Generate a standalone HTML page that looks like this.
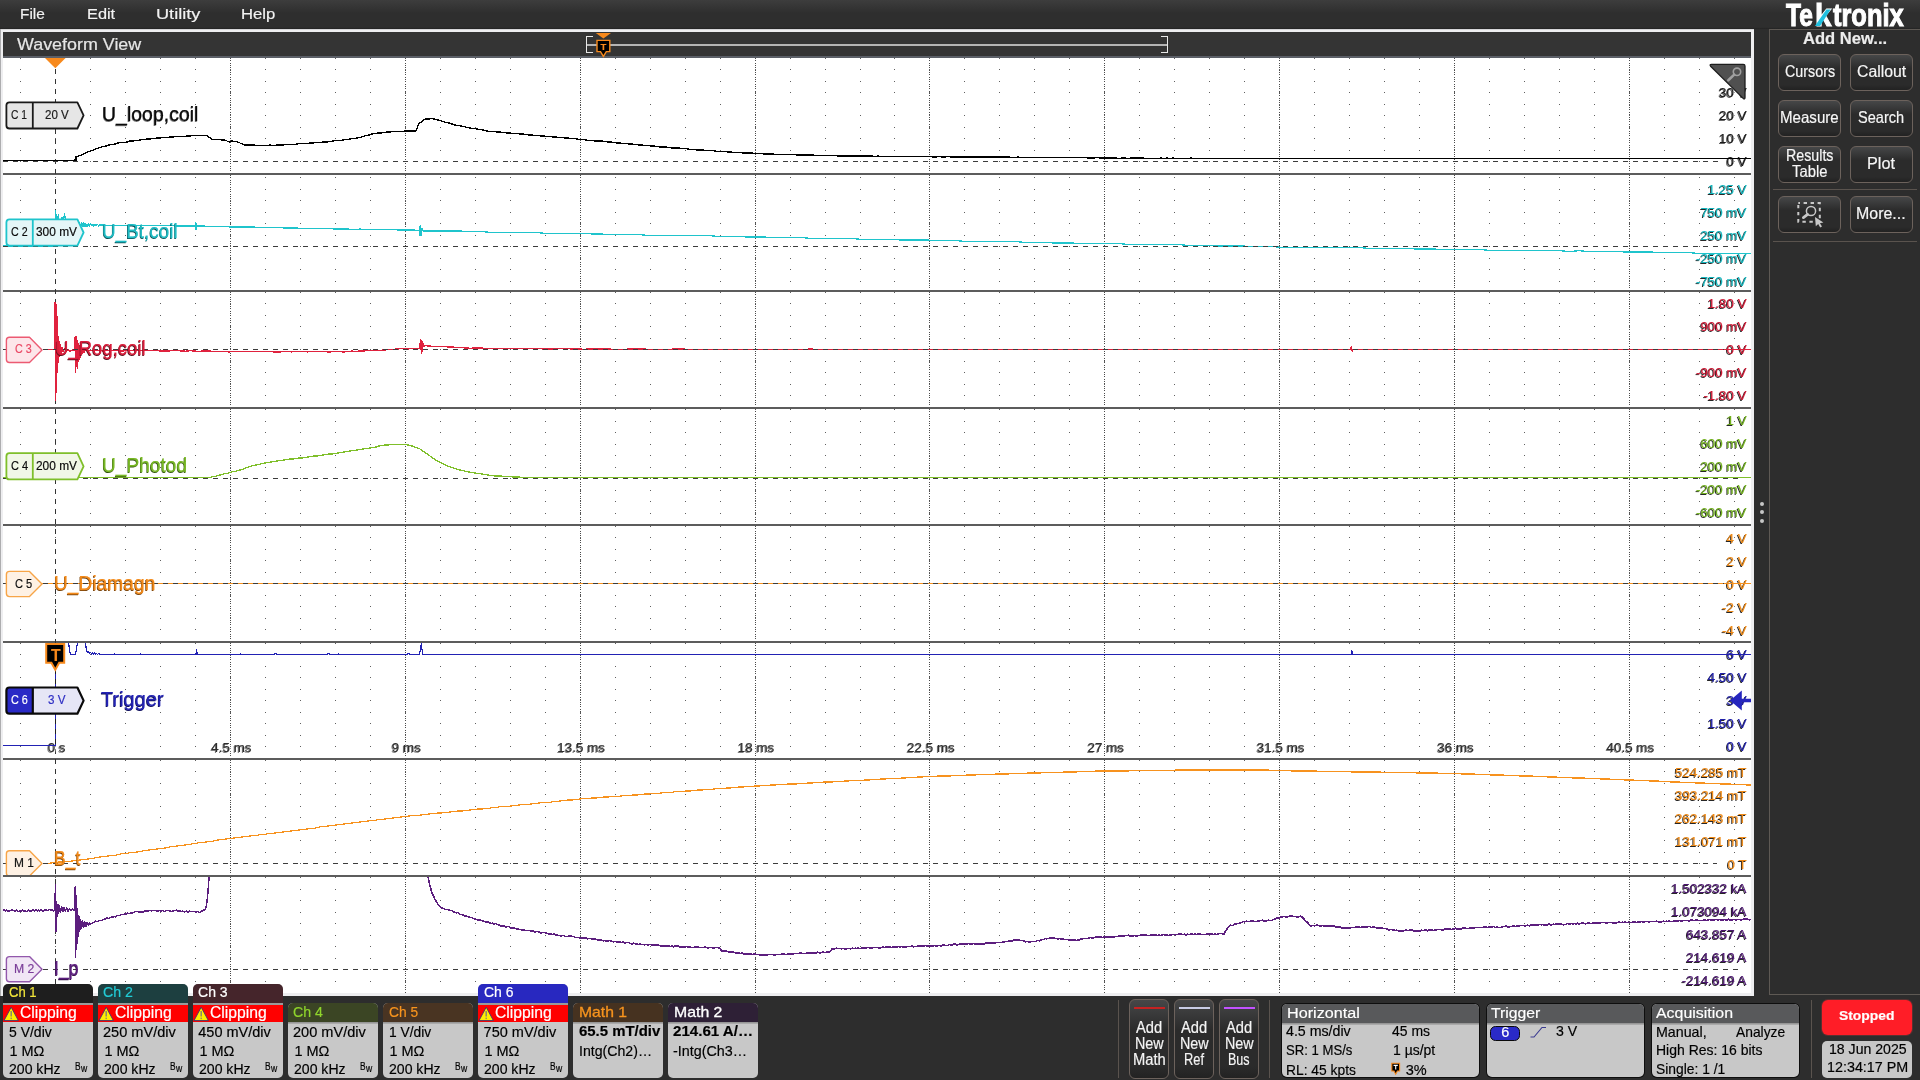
<!DOCTYPE html>
<html lang="en"><head><meta charset="utf-8"><title>Tektronix Waveform View</title>
<style>
html,body{margin:0;padding:0}
body{width:1920px;height:1080px;overflow:hidden;background:#2d2d2d;position:relative;font-family:"Liberation Sans",sans-serif}
svg{position:absolute;left:0;top:0;display:block;pointer-events:none}
.t{position:absolute;white-space:nowrap;line-height:1;transform-origin:0 0;display:block;-webkit-text-stroke:0.18px currentColor}
#menubar{position:absolute;left:0;top:0;width:1920px;height:29px;background:linear-gradient(#3d3d3d,#2e2e2e 45%,#2e2e2e 94%,#222 100%)}
#frame{position:absolute;left:0;top:29px;width:1754px;height:966.7px;background:#eeeef0;box-shadow:inset 1px 0 0 #adadaf,inset 0 1px 0 #d6d6d8}
#wtitle{position:absolute;left:3px;top:32px;width:1748px;height:24px;background:#343434;border-bottom:2px solid #5b5f67}
#side{position:absolute;left:1769px;top:29px;width:160px;height:966px;border:1px solid #5e5954;box-sizing:border-box;background:#2d2d2d}
.btn{position:absolute;border:1px solid #6c625c;border-radius:6px;background:linear-gradient(#464748,#2b2b2b 38%,#2b2b2b 85%,#222)}
.hsep{position:absolute;height:1px;background:#5a534e}
.vsep{position:absolute;width:1px;background:#5a534e}
.bdg{position:absolute;width:90px;background:#c8c8c8;border-radius:5px;overflow:hidden}
.bdg{overflow:clip}
.bh{width:100%}
.bsep{width:100%;height:2px;background:#9a9a9a}
.bsep2{width:100%;height:2px;background:linear-gradient(#8c8c8c,#b4b4b4)}
.clip{width:100%;height:17px;background:#ff0000}
.z1{z-index:1}.z2{z-index:2}.z3{z-index:3}.z4{z-index:4}
</style></head>
<body>
<div id="menubar"></div>
<div id="frame"></div>
<div id="wtitle"></div>
<div style="position:absolute;left:0;top:0;width:1920px;height:1080px;z-index:1;will-change:transform">
<svg id="grid" width="1920" height="1080" viewBox="0 0 1920 1080">
<defs><clipPath id="cpg"><rect x="3" y="58" width="1748" height="935"/></clipPath></defs>
<rect x="3" y="58" width="1748" height="935" fill="#fff"/>
<g clip-path="url(#cpg)">
<g shape-rendering="crispEdges" stroke="#606060" stroke-width="1" fill="none">
<path d="M20.13 58.5H1751" stroke-dasharray="1 33.974"/>
<path d="M20.13 69.5H1751" stroke-dasharray="1 33.974"/>
<path d="M20.13 81.5H1751" stroke-dasharray="1 33.974"/>
<path d="M20.13 92.5H1751" stroke-dasharray="1 33.974"/>
<path d="M20.13 104.5H1751" stroke-dasharray="1 33.974"/>
<path d="M20.13 115.5H1751" stroke-dasharray="1 33.974"/>
<path d="M20.13 127.5H1751" stroke-dasharray="1 33.974"/>
<path d="M20.13 138.5H1751" stroke-dasharray="1 33.974"/>
<path d="M20.13 150.5H1751" stroke-dasharray="1 33.974"/>
<path d="M20.13 161.5H1751" stroke-dasharray="1 33.974"/>
<path d="M20.13 177.5H1751" stroke-dasharray="1 33.974"/>
<path d="M20.13 189.5H1751" stroke-dasharray="1 33.974"/>
<path d="M20.13 200.5H1751" stroke-dasharray="1 33.974"/>
<path d="M20.13 212.5H1751" stroke-dasharray="1 33.974"/>
<path d="M20.13 223.5H1751" stroke-dasharray="1 33.974"/>
<path d="M20.13 235.5H1751" stroke-dasharray="1 33.974"/>
<path d="M20.13 246.5H1751" stroke-dasharray="1 33.974"/>
<path d="M20.13 258.5H1751" stroke-dasharray="1 33.974"/>
<path d="M20.13 269.5H1751" stroke-dasharray="1 33.974"/>
<path d="M20.13 281.5H1751" stroke-dasharray="1 33.974"/>
<path d="M20.13 292.5H1751" stroke-dasharray="1 33.974"/>
<path d="M20.13 303.5H1751" stroke-dasharray="1 33.974"/>
<path d="M20.13 315.5H1751" stroke-dasharray="1 33.974"/>
<path d="M20.13 326.5H1751" stroke-dasharray="1 33.974"/>
<path d="M20.13 338.5H1751" stroke-dasharray="1 33.974"/>
<path d="M20.13 349.5H1751" stroke-dasharray="1 33.974"/>
<path d="M20.13 361.5H1751" stroke-dasharray="1 33.974"/>
<path d="M20.13 372.5H1751" stroke-dasharray="1 33.974"/>
<path d="M20.13 384.5H1751" stroke-dasharray="1 33.974"/>
<path d="M20.13 395.5H1751" stroke-dasharray="1 33.974"/>
<path d="M20.13 409.5H1751" stroke-dasharray="1 33.974"/>
<path d="M20.13 421.5H1751" stroke-dasharray="1 33.974"/>
<path d="M20.13 432.5H1751" stroke-dasharray="1 33.974"/>
<path d="M20.13 444.5H1751" stroke-dasharray="1 33.974"/>
<path d="M20.13 455.5H1751" stroke-dasharray="1 33.974"/>
<path d="M20.13 467.5H1751" stroke-dasharray="1 33.974"/>
<path d="M20.13 478.5H1751" stroke-dasharray="1 33.974"/>
<path d="M20.13 490.5H1751" stroke-dasharray="1 33.974"/>
<path d="M20.13 501.5H1751" stroke-dasharray="1 33.974"/>
<path d="M20.13 513.5H1751" stroke-dasharray="1 33.974"/>
<path d="M20.13 526.5H1751" stroke-dasharray="1 33.974"/>
<path d="M20.13 537.5H1751" stroke-dasharray="1 33.974"/>
<path d="M20.13 549.5H1751" stroke-dasharray="1 33.974"/>
<path d="M20.13 560.5H1751" stroke-dasharray="1 33.974"/>
<path d="M20.13 572.5H1751" stroke-dasharray="1 33.974"/>
<path d="M20.13 583.5H1751" stroke-dasharray="1 33.974"/>
<path d="M20.13 595.5H1751" stroke-dasharray="1 33.974"/>
<path d="M20.13 606.5H1751" stroke-dasharray="1 33.974"/>
<path d="M20.13 618.5H1751" stroke-dasharray="1 33.974"/>
<path d="M20.13 629.5H1751" stroke-dasharray="1 33.974"/>
<path d="M20.13 643.5H1751" stroke-dasharray="1 33.974"/>
<path d="M20.13 654.5H1751" stroke-dasharray="1 33.974"/>
<path d="M20.13 666.5H1751" stroke-dasharray="1 33.974"/>
<path d="M20.13 677.5H1751" stroke-dasharray="1 33.974"/>
<path d="M20.13 689.5H1751" stroke-dasharray="1 33.974"/>
<path d="M20.13 700.5H1751" stroke-dasharray="1 33.974"/>
<path d="M20.13 712.5H1751" stroke-dasharray="1 33.974"/>
<path d="M20.13 723.5H1751" stroke-dasharray="1 33.974"/>
<path d="M20.13 735.5H1751" stroke-dasharray="1 33.974"/>
<path d="M20.13 746.5H1751" stroke-dasharray="1 33.974"/>
<path d="M20.13 760.5H1751" stroke-dasharray="1 33.974"/>
<path d="M20.13 771.5H1751" stroke-dasharray="1 33.974"/>
<path d="M20.13 783.5H1751" stroke-dasharray="1 33.974"/>
<path d="M20.13 794.5H1751" stroke-dasharray="1 33.974"/>
<path d="M20.13 806.5H1751" stroke-dasharray="1 33.974"/>
<path d="M20.13 817.5H1751" stroke-dasharray="1 33.974"/>
<path d="M20.13 829.5H1751" stroke-dasharray="1 33.974"/>
<path d="M20.13 840.5H1751" stroke-dasharray="1 33.974"/>
<path d="M20.13 852.5H1751" stroke-dasharray="1 33.974"/>
<path d="M20.13 863.5H1751" stroke-dasharray="1 33.974"/>
<path d="M20.13 877.5H1751" stroke-dasharray="1 33.974"/>
<path d="M20.13 889.5H1751" stroke-dasharray="1 33.974"/>
<path d="M20.13 900.5H1751" stroke-dasharray="1 33.974"/>
<path d="M20.13 912.5H1751" stroke-dasharray="1 33.974"/>
<path d="M20.13 923.5H1751" stroke-dasharray="1 33.974"/>
<path d="M20.13 935.5H1751" stroke-dasharray="1 33.974"/>
<path d="M20.13 946.5H1751" stroke-dasharray="1 33.974"/>
<path d="M20.13 958.5H1751" stroke-dasharray="1 33.974"/>
<path d="M20.13 969.5H1751" stroke-dasharray="1 33.974"/>
<path d="M20.13 981.5H1751" stroke-dasharray="1 33.974"/>
<path d="M230.5 58V993" stroke="#4a4a4a" stroke-dasharray="1 1.34"/>
<path d="M405.5 58V993" stroke="#4a4a4a" stroke-dasharray="1 1.34"/>
<path d="M580.5 58V993" stroke="#4a4a4a" stroke-dasharray="1 1.34"/>
<path d="M755.5 58V993" stroke="#4a4a4a" stroke-dasharray="1 1.34"/>
<path d="M929.5 58V993" stroke="#4a4a4a" stroke-dasharray="1 1.34"/>
<path d="M1104.5 58V993" stroke="#4a4a4a" stroke-dasharray="1 1.34"/>
<path d="M1279.5 58V993" stroke="#4a4a4a" stroke-dasharray="1 1.34"/>
<path d="M1454.5 58V993" stroke="#4a4a4a" stroke-dasharray="1 1.34"/>
<path d="M1629.5 58V993" stroke="#4a4a4a" stroke-dasharray="1 1.34"/>
</g>
<g shape-rendering="crispEdges" fill="#5c5c5c">
<rect x="3" y="173" width="1748" height="2"/>
<rect x="3" y="290" width="1748" height="2"/>
<rect x="3" y="407" width="1748" height="2"/>
<rect x="3" y="524" width="1748" height="2"/>
<rect x="3" y="641" width="1748" height="2"/>
<rect x="3" y="758" width="1748" height="2"/>
<rect x="3" y="875" width="1748" height="2"/>
</g>
<path d="M55.5 58V993" stroke="#333" stroke-width="1" stroke-dasharray="5 5" stroke-dashoffset="-1" shape-rendering="crispEdges"/>
</g></svg>
</div>
<div style="position:absolute;left:0;top:0;width:1920px;height:1080px;z-index:2;will-change:transform">
<span class="t" style="left:1719.03px;top:86.00px;font-size:13.4px;color:#1a1a1a;text-shadow:-1px 1px 0 #555,0 0 2px #fff,0 0 2px #fff,0 0 3px #fff,0 0 3px #fff;">30 V</span>
<span class="t" style="left:1719.03px;top:109.00px;font-size:13.4px;color:#1a1a1a;text-shadow:-1px 1px 0 #666,0 0 2px #fff,0 0 2px #fff,0 0 3px #fff,0 0 3px #fff;">20 V</span>
<span class="t" style="left:1719.03px;top:132.00px;font-size:13.4px;color:#1a1a1a;text-shadow:-1px 1px 0 #666,0 0 2px #fff,0 0 2px #fff,0 0 3px #fff,0 0 3px #fff;">10 V</span>
<span class="t" style="left:1726.50px;top:155.00px;font-size:13.4px;color:#1a1a1a;text-shadow:-1px 1px 0 #666,0 0 2px #fff,0 0 2px #fff,0 0 3px #fff,0 0 3px #fff;">0 V</span>
<span class="t" style="left:1707.87px;top:183.00px;font-size:13.4px;color:#14b4bc;text-shadow:-1px 1px 0 rgba(0,0,0,0.85),0 0 2px #fff,0 0 2px #fff,0 0 3px #fff,0 0 3px #fff;">1.25 V</span>
<span class="t" style="left:1700.40px;top:206.00px;font-size:13.4px;color:#14b4bc;text-shadow:-1px 1px 0 rgba(0,0,0,0.85),0 0 2px #fff,0 0 2px #fff,0 0 3px #fff,0 0 3px #fff;">750 mV</span>
<span class="t" style="left:1700.40px;top:229.00px;font-size:13.4px;color:#14b4bc;text-shadow:-1px 1px 0 rgba(0,0,0,0.85),0 0 2px #fff,0 0 2px #fff,0 0 3px #fff,0 0 3px #fff;">250 mV</span>
<span class="t" style="left:1695.95px;top:252.00px;font-size:13.4px;color:#14b4bc;text-shadow:-1px 1px 0 rgba(0,0,0,0.85),0 0 2px #fff,0 0 2px #fff,0 0 3px #fff,0 0 3px #fff;">-250 mV</span>
<span class="t" style="left:1695.95px;top:275.00px;font-size:13.4px;color:#14b4bc;text-shadow:-1px 1px 0 rgba(0,0,0,0.85),0 0 2px #fff,0 0 2px #fff,0 0 3px #fff,0 0 3px #fff;">-750 mV</span>
<span class="t" style="left:1707.87px;top:297.00px;font-size:13.4px;color:#cc1834;text-shadow:-1px 1px 0 rgba(0,0,0,0.85),0 0 2px #fff,0 0 2px #fff,0 0 3px #fff,0 0 3px #fff;">1.80 V</span>
<span class="t" style="left:1700.40px;top:320.00px;font-size:13.4px;color:#cc1834;text-shadow:-1px 1px 0 rgba(0,0,0,0.85),0 0 2px #fff,0 0 2px #fff,0 0 3px #fff,0 0 3px #fff;">900 mV</span>
<span class="t" style="left:1726.50px;top:343.00px;font-size:13.4px;color:#cc1834;text-shadow:-1px 1px 0 rgba(0,0,0,0.85),0 0 2px #fff,0 0 2px #fff,0 0 3px #fff,0 0 3px #fff;">0 V</span>
<span class="t" style="left:1695.95px;top:366.00px;font-size:13.4px;color:#cc1834;text-shadow:-1px 1px 0 rgba(0,0,0,0.85),0 0 2px #fff,0 0 2px #fff,0 0 3px #fff,0 0 3px #fff;">-900 mV</span>
<span class="t" style="left:1703.38px;top:389.00px;font-size:13.4px;color:#cc1834;text-shadow:-1px 1px 0 rgba(0,0,0,0.85),0 0 2px #fff,0 0 2px #fff,0 0 3px #fff,0 0 3px #fff;">-1.80 V</span>
<span class="t" style="left:1726.50px;top:414.00px;font-size:13.4px;color:#72b020;text-shadow:-1px 1px 0 rgba(0,0,0,0.85),0 0 2px #fff,0 0 2px #fff,0 0 3px #fff,0 0 3px #fff;">1 V</span>
<span class="t" style="left:1700.40px;top:437.00px;font-size:13.4px;color:#72b020;text-shadow:-1px 1px 0 rgba(0,0,0,0.85),0 0 2px #fff,0 0 2px #fff,0 0 3px #fff,0 0 3px #fff;">600 mV</span>
<span class="t" style="left:1700.40px;top:460.00px;font-size:13.4px;color:#72b020;text-shadow:-1px 1px 0 rgba(0,0,0,0.85),0 0 2px #fff,0 0 2px #fff,0 0 3px #fff,0 0 3px #fff;">200 mV</span>
<span class="t" style="left:1695.95px;top:483.00px;font-size:13.4px;color:#72b020;text-shadow:-1px 1px 0 rgba(0,0,0,0.85),0 0 2px #fff,0 0 2px #fff,0 0 3px #fff,0 0 3px #fff;">-200 mV</span>
<span class="t" style="left:1695.95px;top:506.00px;font-size:13.4px;color:#72b020;text-shadow:-1px 1px 0 rgba(0,0,0,0.85),0 0 2px #fff,0 0 2px #fff,0 0 3px #fff,0 0 3px #fff;">-600 mV</span>
<span class="t" style="left:1726.50px;top:532.00px;font-size:13.4px;color:#ee8a18;text-shadow:-1px 1px 0 rgba(0,0,0,0.85),0 0 2px #fff,0 0 2px #fff,0 0 3px #fff,0 0 3px #fff;">4 V</span>
<span class="t" style="left:1726.50px;top:555.00px;font-size:13.4px;color:#ee8a18;text-shadow:-1px 1px 0 rgba(0,0,0,0.85),0 0 2px #fff,0 0 2px #fff,0 0 3px #fff,0 0 3px #fff;">2 V</span>
<span class="t" style="left:1726.50px;top:578.00px;font-size:13.4px;color:#ee8a18;text-shadow:-1px 1px 0 rgba(0,0,0,0.85),0 0 2px #fff,0 0 2px #fff,0 0 3px #fff,0 0 3px #fff;">0 V</span>
<span class="t" style="left:1722.01px;top:601.00px;font-size:13.4px;color:#ee8a18;text-shadow:-1px 1px 0 rgba(0,0,0,0.85),0 0 2px #fff,0 0 2px #fff,0 0 3px #fff,0 0 3px #fff;">-2 V</span>
<span class="t" style="left:1722.01px;top:624.00px;font-size:13.4px;color:#ee8a18;text-shadow:-1px 1px 0 rgba(0,0,0,0.85),0 0 2px #fff,0 0 2px #fff,0 0 3px #fff,0 0 3px #fff;">-4 V</span>
<span class="t" style="left:1726.50px;top:648.00px;font-size:13.4px;color:#2020a8;text-shadow:-1px 1px 0 rgba(0,0,0,0.85),0 0 2px #fff,0 0 2px #fff,0 0 3px #fff,0 0 3px #fff;">6 V</span>
<span class="t" style="left:1707.87px;top:671.00px;font-size:13.4px;color:#2020a8;text-shadow:-1px 1px 0 rgba(0,0,0,0.85),0 0 2px #fff,0 0 2px #fff,0 0 3px #fff,0 0 3px #fff;">4.50 V</span>
<span class="t" style="left:1726.50px;top:694.00px;font-size:13.4px;color:#2020a8;text-shadow:-1px 1px 0 rgba(0,0,0,0.85),0 0 2px #fff,0 0 2px #fff,0 0 3px #fff,0 0 3px #fff;">3 V</span>
<span class="t" style="left:1707.87px;top:717.00px;font-size:13.4px;color:#2020a8;text-shadow:-1px 1px 0 rgba(0,0,0,0.85),0 0 2px #fff,0 0 2px #fff,0 0 3px #fff,0 0 3px #fff;">1.50 V</span>
<span class="t" style="left:1726.50px;top:740.00px;font-size:13.4px;color:#2020a8;text-shadow:-1px 1px 0 rgba(0,0,0,0.85),0 0 2px #fff,0 0 2px #fff,0 0 3px #fff,0 0 3px #fff;">0 V</span>
<span class="t" style="left:1675.08px;top:766.00px;font-size:13.4px;color:#ee8a18;text-shadow:-1px 1px 0 rgba(0,0,0,0.85),0 0 2px #fff,0 0 2px #fff,0 0 3px #fff,0 0 3px #fff;">524.285 mT</span>
<span class="t" style="left:1675.08px;top:789.00px;font-size:13.4px;color:#ee8a18;text-shadow:-1px 1px 0 rgba(0,0,0,0.85),0 0 2px #fff,0 0 2px #fff,0 0 3px #fff,0 0 3px #fff;">393.214 mT</span>
<span class="t" style="left:1675.08px;top:812.00px;font-size:13.4px;color:#ee8a18;text-shadow:-1px 1px 0 rgba(0,0,0,0.85),0 0 2px #fff,0 0 2px #fff,0 0 3px #fff,0 0 3px #fff;">262.143 mT</span>
<span class="t" style="left:1675.08px;top:835.00px;font-size:13.4px;color:#ee8a18;text-shadow:-1px 1px 0 rgba(0,0,0,0.85),0 0 2px #fff,0 0 2px #fff,0 0 3px #fff,0 0 3px #fff;">131.071 mT</span>
<span class="t" style="left:1727.47px;top:858.00px;font-size:13.4px;color:#ee8a18;text-shadow:-1px 1px 0 rgba(0,0,0,0.85),0 0 2px #fff,0 0 2px #fff,0 0 3px #fff,0 0 3px #fff;">0 T</span>
<span class="t" style="left:1671.33px;top:882.00px;font-size:13.4px;color:#4c1670;text-shadow:-1px 1px 0 rgba(0,0,0,0.85),0 0 2px #fff,0 0 2px #fff,0 0 3px #fff,0 0 3px #fff;">1.502332 kA</span>
<span class="t" style="left:1671.33px;top:905.00px;font-size:13.4px;color:#4c1670;text-shadow:-1px 1px 0 rgba(0,0,0,0.85),0 0 2px #fff,0 0 2px #fff,0 0 3px #fff,0 0 3px #fff;">1.073094 kA</span>
<span class="t" style="left:1686.23px;top:928.00px;font-size:13.4px;color:#4c1670;text-shadow:-1px 1px 0 rgba(0,0,0,0.85),0 0 2px #fff,0 0 2px #fff,0 0 3px #fff,0 0 3px #fff;">643.857 A</span>
<span class="t" style="left:1686.23px;top:951.00px;font-size:13.4px;color:#4c1670;text-shadow:-1px 1px 0 rgba(0,0,0,0.85),0 0 2px #fff,0 0 2px #fff,0 0 3px #fff,0 0 3px #fff;">214.619 A</span>
<span class="t" style="left:1681.78px;top:974.00px;font-size:13.4px;color:#4c1670;text-shadow:-1px 1px 0 rgba(0,0,0,0.85),0 0 2px #fff,0 0 2px #fff,0 0 3px #fff,0 0 3px #fff;">-214.619 A</span>
<span class="t" style="left:47.66px;top:741.00px;font-size:13.4px;color:#2e2e2e;text-shadow:-1px 1px 0 rgba(0,0,0,0.5),0 0 2px #fff,0 0 2px #fff,0 0 3px #fff,0 0 3px #fff;">0 s</span>
<span class="t" style="left:211.37px;top:741.00px;font-size:13.4px;color:#2e2e2e;text-shadow:-1px 1px 0 rgba(0,0,0,0.5),0 0 2px #fff,0 0 2px #fff,0 0 3px #fff,0 0 3px #fff;">4.5 ms</span>
<span class="t" style="left:391.82px;top:741.00px;font-size:13.4px;color:#2e2e2e;text-shadow:-1px 1px 0 rgba(0,0,0,0.5),0 0 2px #fff,0 0 2px #fff,0 0 3px #fff,0 0 3px #fff;">9 ms</span>
<span class="t" style="left:557.37px;top:741.00px;font-size:13.4px;color:#2e2e2e;text-shadow:-1px 1px 0 rgba(0,0,0,0.5),0 0 2px #fff,0 0 2px #fff,0 0 3px #fff,0 0 3px #fff;">13.5 ms</span>
<span class="t" style="left:737.84px;top:741.00px;font-size:13.4px;color:#2e2e2e;text-shadow:-1px 1px 0 rgba(0,0,0,0.5),0 0 2px #fff,0 0 2px #fff,0 0 3px #fff,0 0 3px #fff;">18 ms</span>
<span class="t" style="left:907.11px;top:741.00px;font-size:13.4px;color:#2e2e2e;text-shadow:-1px 1px 0 rgba(0,0,0,0.5),0 0 2px #fff,0 0 2px #fff,0 0 3px #fff,0 0 3px #fff;">22.5 ms</span>
<span class="t" style="left:1087.58px;top:741.00px;font-size:13.4px;color:#2e2e2e;text-shadow:-1px 1px 0 rgba(0,0,0,0.5),0 0 2px #fff,0 0 2px #fff,0 0 3px #fff,0 0 3px #fff;">27 ms</span>
<span class="t" style="left:1256.85px;top:741.00px;font-size:13.4px;color:#2e2e2e;text-shadow:-1px 1px 0 rgba(0,0,0,0.5),0 0 2px #fff,0 0 2px #fff,0 0 3px #fff,0 0 3px #fff;">31.5 ms</span>
<span class="t" style="left:1437.32px;top:741.00px;font-size:13.4px;color:#2e2e2e;text-shadow:-1px 1px 0 rgba(0,0,0,0.5),0 0 2px #fff,0 0 2px #fff,0 0 3px #fff,0 0 3px #fff;">36 ms</span>
<span class="t" style="left:1606.59px;top:741.00px;font-size:13.4px;color:#2e2e2e;text-shadow:-1px 1px 0 rgba(0,0,0,0.5),0 0 2px #fff,0 0 2px #fff,0 0 3px #fff,0 0 3px #fff;">40.5 ms</span>
</div>
<div style="position:absolute;left:0;top:0;width:1920px;height:1080px;z-index:3;will-change:transform">
<svg id="waves" width="1920" height="1080" viewBox="0 0 1920 1080">
<defs><clipPath id="cp"><rect x="3" y="58" width="1748" height="935"/></clipPath></defs>
<clipPath id="cs6"><rect x="3" y="643" width="1748" height="115"/></clipPath><clipPath id="cs8"><rect x="3" y="877" width="1748" height="116"/></clipPath>
<g clip-path="url(#cp)">
<path d="M3.0 160.5L6.0 160.5L9.0 160.5L12.0 160.5L15.0 160.5L18.0 160.5L21.0 160.5L24.0 160.5L27.0 160.5L30.0 160.5L33.0 160.5L36.0 160.5L39.0 160.5L42.0 160.5L45.0 160.5L48.0 160.5L51.0 160.5L54.0 160.5L57.0 160.5L60.0 160.5L63.0 160.5L66.0 160.5L69.0 160.5L72.0 160.5L75.0 160.5L75.5 156.5L76.0 161.0L76.5 157.0L80.0 155.5L83.3 154.0L86.7 152.5L90.0 151.0L93.3 150.0L96.7 148.5L100.0 147.5L103.0 146.5L106.0 146.0L109.0 145.0L112.0 144.5L115.0 144.0L118.0 143.0L121.0 142.5L124.0 142.5L127.0 142.0L130.0 141.0L133.3 141.0L136.7 140.5L140.0 140.0L143.3 139.5L146.7 139.0L150.0 139.0L153.3 138.5L156.7 138.0L160.0 138.0L163.3 137.5L166.7 137.5L170.0 137.0L173.3 137.0L176.7 136.5L180.0 136.5L183.3 136.5L186.7 136.0L190.0 136.0L193.4 135.5L196.8 135.5L200.2 135.5L203.6 135.5L207.0 135.5L212.0 139.5L215.2 139.5L218.5 139.5L221.8 140.0L225.0 140.0L229.0 142.0L232.0 141.0L236.0 141.5L239.0 142.5L242.0 144.0L245.0 145.0L248.0 145.0L251.0 145.0L254.0 145.0L257.0 145.5L260.0 145.5L263.3 145.5L266.7 145.5L270.0 145.0L273.3 145.5L276.7 145.0L280.0 145.0L283.3 145.0L286.7 144.5L290.0 144.5L293.3 144.5L296.7 144.0L300.0 143.5L303.3 143.5L306.7 143.5L310.0 143.0L313.3 143.0L316.7 142.5L320.0 142.5L323.3 142.0L326.7 142.0L330.0 141.5L333.3 141.0L336.7 140.5L340.0 140.5L343.3 140.0L346.7 139.5L350.0 139.0L353.3 138.5L356.7 138.0L360.0 137.5L363.0 136.5L366.0 135.5L369.0 135.0L372.0 134.0L375.0 133.5L378.0 133.0L381.0 133.0L384.0 132.5L387.0 132.0L390.0 132.0L393.0 131.5L396.0 131.5L399.0 131.5L402.0 131.5L405.0 131.0L408.7 131.0L412.3 131.0L416.0 131.0L419.0 123.5L422.0 121.5L425.0 119.0L428.5 119.0L432.0 118.5L436.0 119.5L440.0 120.5L443.0 121.5L446.0 122.5L449.0 123.0L452.0 124.0L455.0 125.0L458.0 125.5L461.0 126.0L464.0 126.5L467.0 127.5L470.0 128.0L473.3 128.5L476.7 129.0L480.0 129.5L483.3 130.0L486.7 131.0L490.0 131.5L493.3 131.5L496.7 132.0L500.0 132.0L503.3 132.5L506.7 133.0L510.0 133.0L513.3 133.5L516.7 133.5L520.0 134.0L523.0 134.0L526.0 134.5L529.0 135.0L532.0 135.0L535.0 135.5L538.0 135.5L541.0 136.0L544.0 136.0L547.0 136.5L550.0 136.5L553.0 137.0L556.0 137.0L559.0 137.5L562.0 137.5L565.0 138.0L568.0 138.0L571.0 138.5L574.0 138.5L577.0 139.0L580.0 139.5L583.1 139.5L586.2 140.0L589.2 140.5L592.3 140.5L595.4 141.0L598.5 141.0L601.5 141.0L604.6 141.5L607.7 142.0L610.8 142.0L613.8 142.5L616.9 143.0L620.0 143.0L623.1 143.5L626.2 143.5L629.2 144.0L632.3 144.0L635.4 144.5L638.5 145.0L641.5 145.0L644.6 145.5L647.7 145.5L650.8 146.0L653.8 146.0L656.9 146.5L660.0 147.0L663.1 147.0L666.2 147.0L669.2 147.5L672.3 148.0L675.4 148.0L678.5 148.0L681.5 148.5L684.6 148.5L687.7 149.0L690.8 149.5L693.8 149.5L696.9 150.0L700.0 150.0L703.1 150.0L706.2 150.5L709.2 150.5L712.3 150.5L715.4 151.0L718.5 151.5L721.5 151.5L724.6 151.5L727.7 152.0L730.8 152.0L733.8 152.5L736.9 152.5L740.0 152.5L743.0 153.0L746.0 153.0L749.0 153.0L752.0 153.0L755.0 153.5L758.0 153.5L761.0 153.5L764.0 154.0L767.0 154.0L770.0 154.0L773.0 154.0L776.0 154.5L779.0 154.5L782.0 154.5L785.0 154.5L788.0 154.5L791.0 154.5L794.0 154.5L797.0 155.0L800.0 155.0L803.1 155.0L806.2 155.0L809.4 155.0L812.5 155.0L815.6 155.5L818.8 155.5L821.9 155.5L825.0 155.5L828.1 155.5L831.2 155.5L834.4 155.5L837.5 156.0L840.6 156.0L843.8 156.0L846.9 156.0L850.0 156.0L853.1 156.0L856.2 156.0L859.2 156.0L862.3 156.0L865.4 156.0L868.5 156.0L871.5 156.0L874.6 156.5L877.7 156.0L880.8 156.5L883.8 156.5L886.9 156.5L890.0 156.5L893.1 156.5L896.2 156.5L899.2 156.5L902.3 156.5L905.4 156.5L908.5 156.5L911.5 156.5L914.6 156.5L917.7 156.5L920.8 156.5L923.8 156.5L926.9 156.5L930.0 156.5L933.0 157.0L936.1 157.0L939.1 156.5L942.2 157.0L945.2 157.0L948.3 156.5L951.3 157.0L954.3 157.0L957.4 157.0L960.4 157.0L963.5 157.0L966.5 157.0L969.6 157.0L972.6 157.0L975.7 157.0L978.7 157.0L981.7 157.0L984.8 157.0L987.8 157.0L990.9 157.0L993.9 157.0L997.0 157.0L1000.0 157.0L1003.0 157.0L1006.1 157.0L1009.1 157.0L1012.1 157.5L1015.2 157.5L1018.2 157.0L1021.2 157.5L1024.2 157.5L1027.3 157.5L1030.3 157.5L1033.3 157.5L1036.4 157.5L1039.4 157.5L1042.4 157.5L1045.5 157.5L1048.5 157.5L1051.5 157.5L1054.5 157.5L1057.6 157.5L1060.6 157.5L1063.6 157.5L1066.7 157.5L1069.7 157.5L1072.7 157.5L1075.8 157.5L1078.8 157.5L1081.8 157.5L1084.8 157.5L1087.9 158.0L1090.9 158.0L1093.9 158.0L1097.0 157.5L1100.0 158.0L1103.1 158.0L1106.2 158.0L1109.4 158.0L1112.5 158.0L1115.6 158.0L1118.8 158.5L1121.9 158.0L1125.0 158.0L1128.0 158.5L1131.0 158.0L1134.1 158.0L1137.1 158.0L1140.1 158.0L1143.1 158.0L1146.1 158.5L1149.1 158.5L1152.2 158.5L1155.2 158.5L1158.2 158.5L1161.2 158.0L1164.2 158.5L1167.2 158.0L1170.3 158.5L1173.3 158.0L1176.3 158.5L1179.3 158.5L1182.3 158.5L1185.3 158.5L1188.4 158.5L1191.4 158.0L1194.4 158.5L1197.4 158.5L1200.4 158.5L1203.4 158.5L1206.5 158.5L1209.5 158.5L1212.5 158.5L1215.5 158.5L1218.5 158.5L1221.6 158.5L1224.6 158.5L1227.6 158.5L1230.6 158.5L1233.6 158.5L1236.6 158.5L1239.7 158.5L1242.7 158.5L1245.7 158.5L1248.7 158.5L1251.7 158.5L1254.7 158.5L1257.8 158.5L1260.8 158.5L1263.8 158.5L1266.8 158.5L1269.8 158.5L1272.8 158.5L1275.9 158.5L1278.9 158.5L1281.9 158.5L1284.9 158.5L1287.9 158.5L1290.9 158.5L1294.0 158.5L1297.0 158.5L1300.0 158.5L1303.0 158.5L1306.0 158.5L1309.0 158.5L1312.0 158.5L1315.0 158.5L1318.0 158.5L1321.0 158.5L1324.1 158.5L1327.1 158.5L1330.1 158.5L1333.1 158.5L1336.1 158.5L1339.1 158.5L1342.1 158.5L1345.1 158.5L1348.1 158.5L1351.1 158.5L1354.1 158.5L1357.1 158.5L1360.1 158.5L1363.1 158.5L1366.1 158.5L1369.2 158.5L1372.2 158.5L1375.2 158.5L1378.2 158.5L1381.2 158.5L1384.2 158.5L1387.2 158.5L1390.2 158.5L1393.2 158.5L1396.2 158.5L1399.2 158.5L1402.2 158.5L1405.2 158.5L1408.2 158.5L1411.2 158.5L1414.3 158.5L1417.3 158.5L1420.3 158.5L1423.3 158.5L1426.3 158.5L1429.3 158.5L1432.3 158.5L1435.3 158.5L1438.3 158.5L1441.3 158.5L1444.3 158.5L1447.3 158.5L1450.3 158.5L1453.3 158.5L1456.3 158.5L1459.4 158.5L1462.4 158.5L1465.4 158.5L1468.4 158.5L1471.4 158.5L1474.4 158.5L1477.4 158.5L1480.4 158.5L1483.4 158.5L1486.4 158.5L1489.4 158.5L1492.4 158.5L1495.4 158.5L1498.4 158.5L1501.4 158.5L1504.5 158.5L1507.5 158.5L1510.5 158.5L1513.5 158.5L1516.5 158.5L1519.5 158.5L1522.5 158.5L1525.5 158.5L1528.5 158.5L1531.5 158.5L1534.5 158.5L1537.5 158.5L1540.5 158.5L1543.5 158.5L1546.5 158.5L1549.6 158.5L1552.6 158.5L1555.6 158.5L1558.6 158.5L1561.6 158.5L1564.6 158.5L1567.6 158.5L1570.6 158.5L1573.6 158.5L1576.6 158.5L1579.6 158.5L1582.6 158.5L1585.6 158.5L1588.6 158.5L1591.6 158.5L1594.7 158.5L1597.7 158.5L1600.7 158.5L1603.7 158.5L1606.7 158.5L1609.7 158.5L1612.7 158.5L1615.7 158.5L1618.7 158.5L1621.7 158.5L1624.7 158.5L1627.7 158.5L1630.7 158.5L1633.7 158.5L1636.7 158.5L1639.8 158.5L1642.8 158.5L1645.8 158.5L1648.8 158.5L1651.8 158.5L1654.8 158.5L1657.8 158.5L1660.8 158.5L1663.8 158.5L1666.8 158.5L1669.8 158.5L1672.8 158.5L1675.8 158.5L1678.8 158.5L1681.8 158.5L1684.9 158.5L1687.9 158.5L1690.9 158.5L1693.9 158.5L1696.9 158.5L1699.9 158.5L1702.9 158.5L1705.9 158.5L1708.9 158.5L1711.9 158.5L1714.9 158.5L1717.9 158.5L1720.9 158.5L1723.9 158.5L1726.9 158.5L1730.0 158.5L1733.0 158.5L1736.0 158.5L1739.0 158.5L1742.0 158.5L1745.0 158.5L1748.0 158.5L1751.0 158.4" fill="none" stroke="#000" stroke-width="1.3" stroke-linejoin="round" shape-rendering="crispEdges" />
<path d="M3.0 246.0L55.0 246.0" fill="none" stroke="#1fc4cc" stroke-width="1.2" stroke-linejoin="round" shape-rendering="crispEdges" />
<path d="M55.5 246.0L55.8 211.0L56.3 224.0L57.0 216.0L57.6 221.0L58.5 214.5L59.0 220.0L61.0 219.0L62.0 217.0L63.0 219.5L64.8 214.0L65.2 219.5L70.0 219.6L76.0 219.8L76.0 223.6L76.9 226.6L77.8 223.8L78.7 226.3L79.6 222.5L80.5 227.1L81.4 222.9L82.3 226.6L83.2 222.9L84.1 227.0L85.0 223.5L85.9 226.5L86.8 224.3L87.7 226.4L88.6 223.9L89.5 226.3L90.4 223.8L91.3 225.7L92.2 224.5L93.1 226.3L94.0 224.5L94.9 225.7L95.8 224.4L96.7 225.5L97.6 224.2L98.5 225.9L99.4 224.6L100.3 225.6L101.2 224.6L102.1 225.4L103.0 224.7L103.9 225.2L103.0 225.6L150.0 225.8L195.0 226.0L195.5 222.6L196.0 229.4L196.6 224.0L197.5 226.2L197.5 226.0L204.0 226.0L210.5 226.5L217.0 226.5L223.5 226.5L230.0 227.0L236.0 227.0L242.0 227.0L248.0 227.0L254.0 227.0L260.0 227.5L266.0 227.5L272.0 227.5L278.0 227.5L284.0 228.0L290.0 228.0L296.4 228.0L302.7 228.5L309.1 228.5L315.5 228.5L321.8 228.5L328.2 228.5L334.5 229.0L340.9 229.0L347.3 229.0L353.6 229.5L360.0 229.0L366.4 229.5L372.9 229.5L379.3 229.5L385.7 229.5L392.1 229.5L398.6 230.0L405.0 230.0L412.0 230.0L419.0 230.3L419.5 227.0L420.0 236.0L420.7 225.5L421.3 235.0L422.0 228.0L422.8 231.0L423.0 231.0L432.0 231.0L441.0 231.0L450.0 231.0L460.0 231.0L470.0 231.6L480.0 231.6L490.0 232.2L500.0 232.2L510.0 232.2L520.0 232.2L529.0 232.8L538.1 232.8L547.1 233.4L556.2 233.4L565.2 233.4L574.3 233.4L583.3 233.4L592.4 234.0L601.4 234.0L610.5 234.6L619.5 234.6L628.6 234.6L637.6 234.6L646.7 235.2L655.7 235.2L664.8 235.2L673.8 235.8L682.9 235.8L691.9 235.8L701.0 235.8L710.0 235.8L719.0 236.4L728.1 236.4L737.1 236.4L746.2 237.0L755.2 237.0L764.3 237.0L773.3 237.6L782.4 237.6L791.4 237.6L800.5 237.6L809.5 238.2L818.6 238.2L827.6 238.2L836.7 238.8L845.7 238.8L854.8 238.8L863.8 239.4L872.9 239.4L881.9 239.4L891.0 239.4L900.0 240.0L909.0 240.0L918.1 240.0L927.1 240.0L936.2 240.6L945.2 240.6L954.3 240.6L963.3 241.2L972.4 241.2L981.4 241.2L990.5 241.2L999.5 241.8L1008.6 241.8L1017.6 241.8L1026.7 242.4L1035.7 242.4L1044.8 242.4L1053.8 243.0L1062.9 243.0L1071.9 243.0L1081.0 243.6L1090.0 243.6L1099.0 243.6L1108.1 243.6L1117.1 243.6L1126.2 244.2L1135.2 244.2L1144.3 244.8L1153.3 244.8L1162.4 244.8L1171.4 244.8L1180.5 244.8L1189.5 245.4L1198.6 245.4L1207.6 245.4L1216.7 246.0L1225.7 246.0L1234.8 246.0L1243.8 246.0L1252.9 246.6L1261.9 246.6L1271.0 246.6L1280.0 247.2L1289.1 247.2L1298.1 247.2L1307.2 247.8L1316.2 247.8L1325.3 247.8L1334.3 247.8L1343.4 247.8L1352.5 247.8L1361.5 247.8L1370.6 248.4L1379.6 248.4L1388.7 248.4L1397.8 248.4L1406.8 248.4L1415.9 249.0L1424.9 249.0L1434.0 249.0L1443.0 249.6L1452.1 249.6L1461.2 249.6L1470.2 249.6L1479.3 249.6L1488.3 250.2L1497.4 250.2L1506.4 250.2L1515.5 250.2L1524.6 250.2L1533.6 250.8L1542.7 250.8L1551.7 250.8L1560.8 250.8L1569.8 251.4L1578.9 250.8L1588.0 251.4L1597.0 251.4L1606.1 251.4L1615.1 251.4L1624.2 252.0L1633.2 252.0L1642.3 252.0L1651.4 252.0L1660.4 252.6L1669.5 252.6L1678.5 252.6L1687.6 252.6L1696.7 253.2L1705.7 253.2L1714.8 253.2L1723.8 253.2L1732.9 253.2L1741.9 253.2L1751.0 253.6" fill="none" stroke="#1fc4cc" stroke-width="1.2" stroke-linejoin="round" shape-rendering="crispEdges" />
<path d="M43.0 349.5L54.8 349.5L55.0 302.5L55.5 400.0L56.0 304.0L56.4 392.0L56.9 316.0L57.3 372.0L57.8 332.0L58.3 362.0L58.9 341.0L59.5 356.0L60.2 345.0L61.0 353.5L62.0 347.5L63.0 352.0L64.5 348.8L66.0 351.5L68.0 349.8L70.0 351.2L72.0 350.0L74.5 350.6L75.0 337.0L75.5 372.5L76.0 336.0L76.5 366.0L77.1 341.0L77.7 368.0L78.3 344.0L78.9 360.0L79.6 345.5L80.4 357.0L81.2 347.0L82.0 354.0L83.0 348.5L84.0 352.2L85.5 349.8L86.0 350.3L90.2 350.8L94.4 350.9L98.6 350.7L102.9 350.9L107.1 350.2L111.3 350.4L115.5 350.5L119.7 350.9L123.9 350.9L128.1 350.4L132.4 350.3L136.6 350.5L140.8 350.5L145.0 350.8L149.0 350.3L153.1 350.8L157.1 350.8L161.2 350.9L165.2 351.0L169.3 350.9L173.3 350.7L177.4 350.8L181.4 350.9L185.5 351.2L189.5 350.8L193.6 350.9L197.6 351.4L201.7 351.1L205.7 351.0L209.8 351.0L213.8 351.4L217.9 351.3L221.9 351.8L226.0 351.8L230.0 351.9L234.1 351.4L238.1 351.3L242.2 351.3L246.3 351.6L250.4 351.8L254.4 351.6L258.5 351.5L262.6 351.6L266.7 351.8L270.7 351.8L274.8 351.9L278.9 351.9L283.0 351.8L287.0 351.4L291.1 351.9L295.2 351.6L299.3 351.8L303.3 351.6L307.4 351.9L311.5 351.5L315.6 351.6L319.6 351.6L323.7 351.5L327.8 352.0L331.9 351.8L335.9 351.7L340.0 351.7L344.0 352.0L348.0 351.4L352.0 351.1L356.0 351.3L360.0 351.0L364.0 351.1L368.0 350.3L372.0 350.3L376.0 350.4L380.0 350.2L384.4 350.1L388.8 349.3L393.1 349.3L397.5 348.9L401.9 348.8L406.2 349.1L410.6 348.7L415.0 348.7L419.5 348.2L420.2 343.0L420.8 339.5L421.3 353.8L421.9 341.0L422.5 351.0L423.2 344.0L424.5 346.5L425.0 345.7L435.0 346.4L445.0 346.8L453.3 347.1L461.7 347.7L470.0 348.2L478.3 348.0L486.7 348.3L495.0 348.4L503.3 348.4L511.7 348.5L520.0 348.6L528.0 348.6L536.0 348.7L544.0 348.9L552.0 349.0L560.0 348.8L568.0 348.8L576.0 349.0L584.0 349.2L592.0 349.0L600.0 349.1L608.2 349.1L616.5 349.3L624.7 349.2L632.9 349.0L641.2 349.1L649.4 349.2L657.6 349.3L665.9 349.3L674.1 349.1L682.4 349.1L690.6 349.3L698.8 349.2L707.1 349.2L715.3 349.2L723.5 349.5L731.8 349.2L740.0 349.3L748.0 349.2L756.1 349.3L764.1 349.5L772.1 349.5L780.1 349.3L788.2 349.2L796.2 349.4L804.2 349.2L812.2 349.1L820.3 349.5L828.3 349.3L836.3 349.5L844.3 349.3L852.4 349.5L860.4 349.3L868.4 349.2L876.4 349.2L884.5 349.4L892.5 349.4L900.5 349.5L908.6 349.2L916.6 349.4L924.6 349.3L932.6 349.4L940.7 349.2L948.7 349.3L956.7 349.4L964.7 349.5L972.8 349.2L980.8 349.4L988.8 349.5L996.8 349.6L1004.9 349.3L1012.9 349.2L1020.9 349.6L1028.9 349.6L1037.0 349.4L1045.0 349.2L1053.0 349.6L1061.1 349.4L1069.1 349.6L1077.1 349.5L1085.1 349.5L1093.2 349.3L1101.2 349.5L1109.2 349.3L1117.2 349.4L1125.3 349.6L1133.3 349.6L1141.3 349.3L1149.3 349.3L1157.4 349.4L1165.4 349.4L1173.4 349.4L1181.4 349.3L1189.5 349.3L1197.5 349.5L1205.5 349.6L1213.6 349.3L1221.6 349.5L1229.6 349.6L1237.6 349.3L1245.7 349.6L1253.7 349.3L1261.7 349.5L1269.7 349.5L1277.8 349.5L1285.8 349.4L1293.8 349.4L1301.8 349.5L1309.9 349.5L1317.9 349.6L1325.9 349.5L1333.9 349.5L1342.0 349.3L1350.0 349.5L1351.5 347.0L1352.2 351.5L1353.0 349.0L1353.0 349.5L1383.6 349.5L1414.2 349.4L1444.8 349.6L1475.5 349.6L1506.1 349.5L1536.7 349.5L1567.3 349.5L1597.9 349.4L1628.5 349.5L1659.2 349.6L1689.8 349.5L1720.4 349.6L1751.0 349.6" fill="none" stroke="#e0223e" stroke-width="1.3" stroke-linejoin="round" shape-rendering="crispEdges" />
<path d="M3.0 477.5L6.0 477.5L9.0 477.5L12.0 477.5L15.0 477.5L18.0 477.5L21.0 477.5L24.0 477.5L27.0 477.5L30.0 477.5L33.0 477.5L36.0 477.5L39.0 477.5L42.0 477.5L45.0 477.5L48.0 477.5L51.0 477.5L54.0 477.5L57.0 477.5L60.0 477.5L63.0 477.5L66.0 477.5L69.0 477.5L72.0 477.5L75.0 477.5L78.0 477.5L81.0 477.5L84.0 477.5L87.0 477.5L90.0 477.5L93.0 477.5L96.0 477.5L99.0 477.5L102.0 477.5L105.0 477.5L108.0 477.5L111.0 477.5L114.0 477.5L117.0 477.5L120.0 477.5L123.0 477.5L126.0 477.5L129.0 477.5L132.0 477.5L135.0 477.5L138.0 477.5L141.0 477.5L144.0 477.5L147.0 477.5L150.0 477.5L153.0 477.5L156.0 477.5L159.0 477.5L162.0 477.5L165.0 477.5L168.0 477.5L171.0 477.5L174.0 477.5L177.0 477.5L180.0 477.5L183.0 477.5L186.0 477.5L189.0 477.5L192.0 477.5L195.0 477.5L198.0 477.5L201.0 477.5L204.0 477.5L207.0 477.5L210.0 477.5L213.3 476.5L216.7 476.0L220.0 475.0L223.3 474.0L226.7 473.5L230.0 472.5L233.3 471.5L236.7 471.0L240.0 470.0L243.3 469.0L246.7 467.5L250.0 466.5L253.0 465.5L256.0 465.0L259.0 464.5L262.0 463.5L265.0 463.0L268.1 462.5L271.2 462.0L274.4 461.5L277.5 461.0L280.6 460.5L283.8 460.0L286.9 459.5L290.0 459.0L293.0 459.0L296.0 458.5L299.0 458.0L302.0 458.0L305.0 457.5L308.0 457.0L311.0 456.5L314.0 456.0L317.0 456.0L320.0 455.5L323.0 455.0L326.0 454.5L329.0 454.0L332.0 454.0L335.0 453.5L338.0 453.0L341.0 452.5L344.0 452.0L347.0 451.5L350.0 451.0L353.3 450.5L356.7 450.0L360.0 449.5L363.3 449.0L366.7 448.5L370.0 448.0L373.0 447.5L376.0 447.0L379.0 446.0L382.0 445.5L385.0 445.0L388.3 445.0L391.7 444.5L395.0 444.5L398.3 444.5L401.7 444.5L405.0 444.5L408.5 445.0L412.0 446.0L416.0 447.5L420.0 449.0L423.3 451.5L426.7 453.5L430.0 456.0L433.3 458.5L436.7 460.5L440.0 462.5L443.3 464.0L446.7 465.5L450.0 467.0L453.3 468.0L456.7 469.0L460.0 470.0L463.0 470.5L466.0 471.5L469.0 472.0L472.0 472.5L475.0 473.0L478.3 473.5L481.7 474.0L485.0 474.5L488.3 475.0L491.7 475.5L495.0 476.0L498.0 476.0L501.0 476.0L504.0 476.5L507.0 476.5L510.0 476.5L513.0 477.0L516.0 477.0L519.0 477.0L522.0 477.5L525.0 477.5L528.0 477.5L531.0 477.5L534.0 477.5L537.0 477.5L540.0 477.5L543.0 477.5L546.0 477.5L549.0 477.5L552.0 477.5L555.0 477.5L558.1 477.5L561.1 477.5L564.1 477.5L567.1 477.5L570.1 477.5L573.1 477.5L576.1 477.5L579.1 477.5L582.1 477.5L585.1 477.5L588.1 477.5L591.1 477.5L594.1 477.5L597.1 477.5L600.1 477.5L603.1 477.5L606.1 477.5L609.1 477.5L612.1 477.5L615.1 477.5L618.2 477.5L621.2 477.5L624.2 477.5L627.2 477.5L630.2 477.5L633.2 477.5L636.2 477.5L639.2 477.5L642.2 477.5L645.2 477.5L648.2 477.5L651.2 477.5L654.2 477.5L657.2 477.5L660.2 477.5L663.2 477.5L666.2 477.5L669.2 477.5L672.2 477.5L675.2 477.5L678.2 477.5L681.3 477.5L684.3 477.5L687.3 477.5L690.3 477.5L693.3 477.5L696.3 477.5L699.3 477.5L702.3 477.5L705.3 477.5L708.3 477.5L711.3 477.5L714.3 477.5L717.3 477.5L720.3 477.5L723.3 477.5L726.3 477.5L729.3 477.5L732.3 477.5L735.3 477.5L738.3 477.5L741.4 477.5L744.4 477.5L747.4 477.5L750.4 477.5L753.4 477.5L756.4 477.5L759.4 477.5L762.4 477.5L765.4 477.5L768.4 477.5L771.4 477.5L774.4 477.5L777.4 477.5L780.4 477.5L783.4 477.5L786.4 477.5L789.4 477.5L792.4 477.5L795.4 477.5L798.4 477.5L801.5 477.5L804.5 477.5L807.5 477.5L810.5 477.5L813.5 477.5L816.5 477.5L819.5 477.5L822.5 477.5L825.5 477.5L828.5 477.5L831.5 477.5L834.5 477.5L837.5 477.5L840.5 477.5L843.5 477.5L846.5 477.5L849.5 477.5L852.5 477.5L855.5 477.5L858.5 477.5L861.5 477.5L864.6 477.5L867.6 477.5L870.6 477.5L873.6 477.5L876.6 477.5L879.6 477.5L882.6 477.5L885.6 477.5L888.6 477.5L891.6 477.5L894.6 477.5L897.6 477.5L900.6 477.5L903.6 477.5L906.6 477.5L909.6 477.5L912.6 477.5L915.6 477.5L918.6 477.5L921.6 477.5L924.7 477.5L927.7 477.5L930.7 477.5L933.7 477.5L936.7 477.5L939.7 477.5L942.7 477.5L945.7 477.5L948.7 477.5L951.7 477.5L954.7 477.5L957.7 477.5L960.7 477.5L963.7 477.5L966.7 477.5L969.7 477.5L972.7 477.5L975.7 477.5L978.7 477.5L981.7 477.5L984.8 477.5L987.8 477.5L990.8 477.5L993.8 477.5L996.8 477.5L999.8 477.5L1002.8 477.5L1005.8 477.5L1008.8 477.5L1011.8 477.5L1014.8 477.5L1017.8 477.5L1020.8 477.5L1023.8 477.5L1026.8 477.5L1029.8 477.5L1032.8 477.5L1035.8 477.5L1038.8 477.5L1041.8 477.5L1044.8 477.5L1047.9 477.5L1050.9 477.5L1053.9 477.5L1056.9 477.5L1059.9 477.5L1062.9 477.5L1065.9 477.5L1068.9 477.5L1071.9 477.5L1074.9 477.5L1077.9 477.5L1080.9 477.5L1083.9 477.5L1086.9 477.5L1089.9 477.5L1092.9 477.5L1095.9 477.5L1098.9 477.5L1101.9 477.5L1104.9 477.5L1108.0 477.5L1111.0 477.5L1114.0 477.5L1117.0 477.5L1120.0 477.5L1123.0 477.5L1126.0 477.5L1129.0 477.5L1132.0 477.5L1135.0 477.5L1138.0 477.5L1141.0 477.5L1144.0 477.5L1147.0 477.5L1150.0 477.5L1153.0 477.5L1156.0 477.5L1159.0 477.5L1162.0 477.5L1165.0 477.5L1168.0 477.5L1171.1 477.5L1174.1 477.5L1177.1 477.5L1180.1 477.5L1183.1 477.5L1186.1 477.5L1189.1 477.5L1192.1 477.5L1195.1 477.5L1198.1 477.5L1201.1 477.5L1204.1 477.5L1207.1 477.5L1210.1 477.5L1213.1 477.5L1216.1 477.5L1219.1 477.5L1222.1 477.5L1225.1 477.5L1228.1 477.5L1231.2 477.5L1234.2 477.5L1237.2 477.5L1240.2 477.5L1243.2 477.5L1246.2 477.5L1249.2 477.5L1252.2 477.5L1255.2 477.5L1258.2 477.5L1261.2 477.5L1264.2 477.5L1267.2 477.5L1270.2 477.5L1273.2 477.5L1276.2 477.5L1279.2 477.5L1282.2 477.5L1285.2 477.5L1288.2 477.5L1291.2 477.5L1294.3 477.5L1297.3 477.5L1300.3 477.5L1303.3 477.5L1306.3 477.5L1309.3 477.5L1312.3 477.5L1315.3 477.5L1318.3 477.5L1321.3 477.5L1324.3 477.5L1327.3 477.5L1330.3 477.5L1333.3 477.5L1336.3 477.5L1339.3 477.5L1342.3 477.5L1345.3 477.5L1348.3 477.5L1351.3 477.5L1354.4 477.5L1357.4 477.5L1360.4 477.5L1363.4 477.5L1366.4 477.5L1369.4 477.5L1372.4 477.5L1375.4 477.5L1378.4 477.5L1381.4 477.5L1384.4 477.5L1387.4 477.5L1390.4 477.5L1393.4 477.5L1396.4 477.5L1399.4 477.5L1402.4 477.5L1405.4 477.5L1408.4 477.5L1411.4 477.5L1414.5 477.5L1417.5 477.5L1420.5 477.5L1423.5 477.5L1426.5 477.5L1429.5 477.5L1432.5 477.5L1435.5 477.5L1438.5 477.5L1441.5 477.5L1444.5 477.5L1447.5 477.5L1450.5 477.5L1453.5 477.5L1456.5 477.5L1459.5 477.5L1462.5 477.5L1465.5 477.5L1468.5 477.5L1471.5 477.5L1474.5 477.5L1477.6 477.5L1480.6 477.5L1483.6 477.5L1486.6 477.5L1489.6 477.5L1492.6 477.5L1495.6 477.5L1498.6 477.5L1501.6 477.5L1504.6 477.5L1507.6 477.5L1510.6 477.5L1513.6 477.5L1516.6 477.5L1519.6 477.5L1522.6 477.5L1525.6 477.5L1528.6 477.5L1531.6 477.5L1534.6 477.5L1537.7 477.5L1540.7 477.5L1543.7 477.5L1546.7 477.5L1549.7 477.5L1552.7 477.5L1555.7 477.5L1558.7 477.5L1561.7 477.5L1564.7 477.5L1567.7 477.5L1570.7 477.5L1573.7 477.5L1576.7 477.5L1579.7 477.5L1582.7 477.5L1585.7 477.5L1588.7 477.5L1591.7 477.5L1594.7 477.5L1597.8 477.5L1600.8 477.5L1603.8 477.5L1606.8 477.5L1609.8 477.5L1612.8 477.5L1615.8 477.5L1618.8 477.5L1621.8 477.5L1624.8 477.5L1627.8 477.5L1630.8 477.5L1633.8 477.5L1636.8 477.5L1639.8 477.5L1642.8 477.5L1645.8 477.5L1648.8 477.5L1651.8 477.5L1654.8 477.5L1657.8 477.5L1660.9 477.5L1663.9 477.5L1666.9 477.5L1669.9 477.5L1672.9 477.5L1675.9 477.5L1678.9 477.5L1681.9 477.5L1684.9 477.5L1687.9 477.5L1690.9 477.5L1693.9 477.5L1696.9 477.5L1699.9 477.5L1702.9 477.5L1705.9 477.5L1708.9 477.5L1711.9 477.5L1714.9 477.5L1717.9 477.5L1721.0 477.5L1724.0 477.5L1727.0 477.5L1730.0 477.5L1733.0 477.5L1736.0 477.5L1739.0 477.5L1742.0 477.5L1745.0 477.5L1748.0 477.5L1751.0 477.6" fill="none" stroke="#7fbf2a" stroke-width="1.3" stroke-linejoin="round" shape-rendering="crispEdges" />
<path d="M42 583.5H1751" stroke="#f7921e" stroke-width="1.2"/>
<path d="M3.0 745.5L55.5 745.5L55.5 600.0" fill="none" stroke="#2222b4" stroke-width="1.2" stroke-linejoin="round" shape-rendering="crispEdges" clip-path="url(#cs6)"/>
<path d="M55.5 671V745" stroke="#222" stroke-width="1" stroke-dasharray="5 5" stroke-dashoffset="-8" shape-rendering="crispEdges"/>
<path d="M68.0 600.0L68.6 643.0L69.6 650.0L70.5 654.5L75.5 654.5L76.4 649.0L77.5 643.0L78.0 600.0" fill="none" stroke="#2222b4" stroke-width="1.2" stroke-linejoin="round" shape-rendering="crispEdges" clip-path="url(#cs6)"/>
<path d="M85.2 600.0L85.6 643.0L86.2 649.0L87.5 652.5L88.5 651.5L89.5 653.8L90.5 652.2L91.5 654.0L92.5 652.8L93.5 654.3L94.5 653.0L95.5 654.4L96.5 653.2L97.5 654.5L98.5 653.5L100.0 654.5L114.0 654.5L114.3 653.3L114.7 654.5L140.0 654.5L140.3 653.4L140.7 654.5L196.0 654.5L196.3 649.3L196.9 652.0L197.3 654.5L240.0 654.5L240.3 653.5L240.6 654.5L274.0 654.5L274.4 653.3L276.5 653.3L277.0 654.5L327.0 654.5L327.3 653.4L329.0 653.4L329.4 654.5L338.0 654.5L338.3 653.6L338.8 654.5L407.0 654.5L407.5 653.4L409.5 653.4L410.0 654.5L419.5 654.5L420.3 650.0L421.3 644.0L422.2 651.0L423.0 654.5L1351.5 654.5L1351.8 650.8L1352.6 654.5L1751.0 654.5" fill="none" stroke="#2222b4" stroke-width="1.2" stroke-linejoin="round" shape-rendering="crispEdges" clip-path="url(#cs6)"/>
<path d="M47.0 863.5L51.1 863.0L55.2 862.5L59.4 862.0L63.5 862.0L67.6 861.5L71.8 861.0L75.9 860.5L80.0 860.0L84.1 859.5L88.1 859.0L92.2 858.5L96.2 857.5L100.3 857.0L104.3 856.5L108.4 856.0L112.4 855.5L116.5 855.0L120.5 854.0L124.6 853.5L128.6 853.0L132.7 852.5L136.8 852.0L140.8 851.5L144.9 850.5L148.9 850.0L153.0 849.5L157.0 849.0L161.1 848.5L165.1 848.0L169.2 847.0L173.2 846.5L177.3 846.0L181.4 845.5L185.4 845.0L189.5 844.5L193.5 843.5L197.6 843.0L201.6 842.5L205.7 842.0L209.7 841.5L213.8 841.0L217.8 840.0L221.9 839.5L225.9 839.0L230.0 838.5L234.1 838.0L238.1 837.5L242.2 837.0L246.3 836.5L250.3 836.0L254.4 835.5L258.5 835.0L262.6 834.5L266.6 834.0L270.7 833.5L274.8 833.0L278.8 832.5L282.9 832.0L287.0 831.5L291.0 831.0L295.1 830.5L299.2 830.0L303.3 829.5L307.3 829.0L311.4 828.5L315.5 828.0L319.5 827.0L323.6 826.5L327.7 826.0L331.7 825.5L335.8 825.0L339.9 824.5L344.0 824.0L348.0 823.5L352.1 823.0L356.2 822.5L360.2 822.0L364.3 821.5L368.4 821.0L372.4 820.5L376.5 820.0L380.6 819.5L384.7 819.0L388.7 818.5L392.8 818.0L396.9 817.5L400.9 817.0L405.0 816.5L409.1 816.0L413.1 815.5L417.2 815.5L421.3 815.0L425.3 814.5L429.4 814.0L433.5 813.5L437.6 813.0L441.6 813.0L445.7 812.5L449.8 812.0L453.8 811.5L457.9 811.0L462.0 811.0L466.0 810.5L470.1 810.0L474.2 809.5L478.3 809.0L482.3 809.0L486.4 808.5L490.5 808.0L494.5 807.5L498.6 807.0L502.7 806.5L506.7 806.5L510.8 806.0L514.9 805.5L519.0 805.0L523.0 804.5L527.1 804.5L531.2 804.0L535.2 803.5L539.3 803.0L543.4 802.5L547.4 802.5L551.5 802.0L555.6 801.5L559.7 801.0L563.7 800.5L567.8 800.0L571.9 800.0L575.9 799.5L580.0 799.0L584.1 798.5L588.1 798.5L592.2 798.0L596.3 798.0L600.3 797.5L604.4 797.0L608.5 797.0L612.6 796.5L616.6 796.5L620.7 796.0L624.8 795.5L628.8 795.5L632.9 795.0L637.0 795.0L641.0 794.5L645.1 794.0L649.2 794.0L653.3 793.5L657.3 793.5L661.4 793.0L665.5 792.5L669.5 792.5L673.6 792.0L677.7 791.5L681.7 791.5L685.8 791.0L689.9 791.0L694.0 790.5L698.0 790.0L702.1 790.0L706.2 789.5L710.2 789.5L714.3 789.0L718.4 788.5L722.4 788.5L726.5 788.0L730.6 788.0L734.7 787.5L738.7 787.0L742.8 787.0L746.9 786.5L750.9 786.5L755.0 786.0L759.1 786.0L763.1 785.5L767.2 785.5L771.3 785.0L775.3 785.0L779.4 784.5L783.5 784.5L787.6 784.0L791.6 784.0L795.7 784.0L799.8 783.5L803.8 783.5L807.9 783.0L812.0 783.0L816.0 782.5L820.1 782.5L824.2 782.0L828.3 782.0L832.3 782.0L836.4 781.5L840.5 781.5L844.5 781.0L848.6 781.0L852.7 780.5L856.7 780.5L860.8 780.5L864.9 780.0L869.0 780.0L873.0 779.5L877.1 779.5L881.2 779.0L885.2 779.0L889.3 778.5L893.4 778.5L897.4 778.5L901.5 778.0L905.6 778.0L909.7 777.5L913.7 777.5L917.8 777.0L921.9 777.0L925.9 776.5L930.0 776.5L934.1 776.5L938.2 776.0L942.4 776.0L946.5 776.0L950.6 776.0L954.7 775.5L958.8 775.5L962.9 775.5L967.1 775.0L971.2 775.0L975.3 775.0L979.4 774.5L983.5 774.5L987.6 774.5L991.8 774.5L995.9 774.0L1000.0 774.0L1004.0 774.0L1008.0 774.0L1012.0 773.5L1016.0 773.5L1020.0 773.5L1024.0 773.5L1028.0 773.0L1032.0 773.0L1036.0 773.0L1040.0 773.0L1044.0 772.5L1048.0 772.5L1052.0 772.5L1056.0 772.5L1060.0 772.5L1064.0 772.0L1068.0 772.0L1072.0 772.0L1076.0 772.0L1080.0 771.5L1084.0 771.5L1088.0 771.5L1092.0 771.5L1096.0 771.0L1100.0 771.0L1104.0 771.0L1108.0 771.0L1112.0 771.0L1116.0 771.0L1120.0 771.0L1124.0 771.0L1128.0 771.0L1132.0 770.5L1136.0 770.5L1140.0 770.5L1144.0 770.5L1148.0 770.5L1152.0 770.5L1156.0 770.5L1160.0 770.5L1164.0 770.5L1168.0 770.5L1172.0 770.5L1176.0 770.0L1180.0 770.0L1184.0 770.0L1188.0 770.0L1192.0 770.0L1196.0 770.0L1200.0 770.0L1204.0 770.0L1208.0 770.0L1212.0 770.0L1216.0 770.0L1220.0 770.0L1224.0 770.0L1228.0 770.0L1232.0 770.0L1236.0 770.0L1240.0 770.0L1244.0 770.0L1248.0 770.0L1252.0 770.0L1256.0 770.0L1260.0 770.0L1264.0 770.0L1268.0 770.0L1272.0 770.5L1276.0 770.5L1280.0 770.5L1284.0 770.5L1288.0 770.5L1292.0 771.0L1296.0 771.0L1300.0 771.0L1304.0 771.0L1308.0 771.0L1312.0 771.0L1316.0 771.0L1320.0 771.5L1324.0 771.5L1328.0 771.5L1332.0 771.5L1336.0 771.5L1340.0 771.5L1344.0 771.5L1348.0 771.5L1352.0 772.0L1356.0 772.0L1360.0 772.0L1364.0 772.0L1368.0 772.0L1372.0 772.0L1376.0 772.0L1380.0 772.0L1384.0 772.5L1388.0 772.5L1392.0 772.5L1396.0 772.5L1400.0 772.5L1404.2 772.5L1408.3 772.5L1412.5 772.5L1416.6 773.0L1420.8 773.0L1424.9 773.0L1429.1 773.0L1433.2 773.0L1437.4 773.0L1441.5 773.5L1445.7 773.5L1449.8 773.5L1454.0 773.5L1458.1 773.5L1462.2 774.0L1466.3 774.0L1470.4 774.0L1474.5 774.0L1478.6 774.5L1482.7 774.5L1486.8 774.5L1490.9 775.0L1495.0 775.0L1499.0 775.0L1503.1 775.0L1507.2 775.5L1511.3 775.5L1515.4 775.5L1519.5 776.0L1523.6 776.0L1527.7 776.0L1531.8 776.0L1535.9 776.5L1540.0 776.5L1544.0 776.5L1548.1 777.0L1552.1 777.0L1556.2 777.0L1560.2 777.5L1564.3 777.5L1568.3 777.5L1572.4 778.0L1576.4 778.0L1580.5 778.0L1584.5 778.0L1588.5 778.5L1592.6 778.5L1596.6 778.5L1600.7 779.0L1604.7 779.0L1608.8 779.0L1612.8 779.5L1616.9 779.5L1620.9 779.5L1625.0 780.0L1629.0 780.0L1633.2 780.0L1637.4 780.5L1641.5 780.5L1645.7 780.5L1649.9 781.0L1654.1 781.0L1658.2 781.0L1662.4 781.5L1666.6 781.5L1670.8 782.0L1674.9 782.0L1679.1 782.0L1683.3 782.5L1687.5 782.5L1691.6 782.5L1695.8 783.0L1700.0 783.0L1704.2 783.0L1708.5 783.5L1712.8 783.5L1717.0 783.5L1721.2 784.0L1725.5 784.0L1729.8 784.0L1734.0 784.5L1738.2 784.5L1742.5 784.5L1746.8 785.0L1751.0 785.0" fill="none" stroke="#f7921e" stroke-width="1.2" stroke-linejoin="round" shape-rendering="crispEdges" />
<path d="M3.0 910.6L4.2 909.8L5.5 910.8L6.7 909.8L7.9 911.0L9.1 911.1L10.4 910.6L11.6 909.8L12.8 910.6L14.0 910.3L15.3 911.4L16.5 909.9L17.7 911.2L18.9 911.4L20.2 911.0L21.4 911.1L22.6 910.0L23.8 911.4L25.1 910.5L26.3 911.3L27.5 911.3L28.8 909.9L30.0 911.0L31.2 911.3L32.4 909.7L33.7 910.2L34.9 910.9L36.1 909.9L37.3 911.2L38.6 910.1L39.8 911.0L41.0 909.8L42.2 910.5L43.5 911.2L44.7 909.9L45.9 910.0L47.1 910.4L48.4 910.1L49.6 909.6L50.8 909.8L52.0 909.8L53.3 911.2L54.5 910.4L55.0 908.0L55.4 884.9L55.9 931.8L56.5 902.0L57.1 916.0L57.8 904.5L58.6 913.5L59.5 906.0L60.5 912.0L61.6 907.0L62.8 911.5L64.0 907.5L65.3 911.3L66.6 908.0L68.0 911.0L69.5 908.3L71.0 910.8L72.5 908.8L74.0 910.6L74.9 909.5L75.2 887.0L75.7 957.4L76.3 896.0L76.9 944.0L77.5 909.0L78.2 936.0L78.9 916.0L79.7 931.0L80.6 919.5L81.5 928.5L82.5 921.0L83.6 927.3L84.8 921.8L86.0 926.4L87.2 922.2L88.5 925.6L89.5 923.0L90.0 923.9L91.4 923.7L92.9 922.2L94.3 922.6L95.7 921.2L97.1 921.4L98.6 921.0L100.0 920.2L101.4 920.5L102.9 919.6L104.3 919.2L105.7 919.2L107.1 917.7L108.6 918.5L110.0 917.6L111.3 917.0L112.7 917.2L114.0 916.2L115.3 916.9L116.7 916.0L118.0 915.4L119.3 915.7L120.7 914.9L122.0 914.2L123.3 914.7L124.7 913.5L126.0 914.2L127.3 913.2L128.7 913.4L130.0 913.6L131.3 912.9L132.7 912.9L134.0 912.3L135.3 911.7L136.7 911.6L138.0 911.6L139.3 912.2L140.7 911.8L142.0 911.8L143.3 912.2L144.7 911.0L146.0 911.0L147.3 911.5L148.7 910.5L150.0 910.3L151.3 910.8L152.6 910.4L153.9 910.8L155.3 910.6L156.6 911.1L157.9 911.1L159.2 910.5L160.5 911.1L161.8 910.9L163.2 910.4L164.5 911.5L165.8 910.5L167.1 910.4L168.4 910.3L169.7 911.0L171.1 911.4L172.4 911.2L173.7 910.7L175.0 910.5L176.3 910.2L177.6 911.2L178.9 911.1L180.3 910.9L181.6 911.4L182.9 911.2L184.2 911.9L185.5 911.7L186.8 911.1L188.2 912.1L189.5 911.0L190.8 911.7L192.1 911.6L193.4 911.5L194.7 911.3L196.1 912.4L197.4 911.4L198.7 912.2L200.0 912.8L201.5 911.1L203.0 910.6L205.5 909.0L206.5 905.0L207.5 897.0L208.3 888.0L209.0 878.0L209.4 860.0" fill="none" stroke="#5c1e7e" stroke-width="1.5" stroke-linejoin="round" shape-rendering="crispEdges" clip-path="url(#cs8)"/>
<path d="M427.6 860.0L428.0 877.0L430.0 886.0L432.0 892.7L435.0 899.5L438.0 904.3L441.0 907.7L441.0 907.8L442.6 908.2L444.1 908.8L445.7 909.5L447.2 909.3L448.8 909.9L450.3 910.3L451.9 910.5L453.4 912.0L455.0 912.3L456.5 912.8L458.0 912.6L459.5 914.1L461.0 914.5L462.5 914.8L464.0 915.7L465.5 915.9L467.0 916.3L468.5 916.7L470.0 917.4L471.5 917.6L473.0 918.3L474.5 919.1L476.0 919.4L477.5 920.0L479.0 920.2L480.5 920.1L482.0 920.8L483.5 921.0L485.0 921.8L486.5 921.9L488.0 922.0L489.5 922.8L491.0 923.5L492.5 923.1L494.0 924.2L495.5 923.6L497.0 924.3L498.5 924.6L500.0 925.6L501.5 926.1L503.0 926.1L504.5 926.0L506.0 926.9L507.5 926.5L509.0 926.7L510.5 927.7L512.0 927.7L513.5 928.1L515.0 928.3L516.5 929.0L518.0 928.7L519.5 929.4L521.0 929.5L522.5 930.0L524.0 929.8L525.5 930.4L527.0 930.5L528.5 930.5L530.0 930.7L531.5 931.3L533.0 931.0L534.5 932.1L536.0 931.5L537.5 931.6L539.0 931.9L540.5 933.0L542.0 932.5L543.5 932.5L545.0 932.6L546.5 932.9L548.0 933.8L549.5 933.9L551.0 934.2L552.5 934.5L554.0 934.0L555.5 934.8L557.0 934.7L558.5 935.4L560.0 935.7L561.5 935.9L563.1 935.2L564.6 936.2L566.2 936.5L567.7 936.7L569.2 936.0L570.8 936.2L572.3 936.3L573.8 936.4L575.4 937.5L576.9 937.6L578.5 937.6L580.0 938.0L581.5 938.0L583.1 937.8L584.6 937.8L586.2 937.9L587.7 938.8L589.2 938.4L590.8 938.7L592.3 939.0L593.8 938.7L595.4 939.2L596.9 939.4L598.5 940.1L600.0 939.9L601.5 940.0L603.1 940.8L604.6 940.5L606.2 941.0L607.7 941.0L609.2 940.5L610.8 941.1L612.3 941.3L613.8 941.8L615.4 941.5L616.9 942.0L618.5 942.0L620.0 941.8L621.5 942.7L623.1 942.0L624.6 943.0L626.2 942.4L627.7 942.4L629.2 942.8L630.8 943.6L632.3 944.0L633.8 943.1L635.4 943.8L636.9 944.0L638.5 944.5L640.0 944.0L641.5 944.4L643.1 944.3L644.6 944.9L646.2 944.4L647.7 945.2L649.2 944.6L650.8 944.6L652.3 945.3L653.8 945.1L655.4 944.8L656.9 945.5L658.5 944.9L660.0 945.8L661.5 945.8L663.1 946.0L664.6 945.9L666.2 945.7L667.7 945.9L669.2 945.9L670.8 946.6L672.3 945.8L673.8 946.8L675.4 945.9L676.9 946.2L678.5 946.3L680.0 947.1L681.5 946.8L683.1 946.7L684.6 947.3L686.2 946.6L687.7 946.9L689.2 947.0L690.8 947.3L692.3 947.4L693.8 947.3L695.4 947.0L696.9 947.1L698.5 946.9L700.0 947.7L701.5 947.6L703.1 947.7L704.6 947.1L706.2 947.5L707.7 947.9L709.2 947.7L710.8 947.3L712.3 947.7L713.8 948.2L715.4 947.6L716.9 947.6L718.5 947.7L720.0 948.2L722.0 951.4L723.5 950.8L725.0 951.0L726.5 951.3L728.0 951.6L729.5 952.0L731.0 951.8L732.5 952.2L734.0 952.2L735.5 953.2L737.0 953.2L738.5 952.7L740.0 953.8L741.5 953.0L743.1 953.4L744.6 954.2L746.2 954.1L747.7 954.2L749.2 954.0L750.8 953.9L752.3 954.5L753.8 954.0L755.4 954.3L756.9 954.6L758.5 954.4L760.0 954.9L761.5 955.3L763.1 955.1L764.6 954.8L766.2 954.9L767.7 954.7L769.2 954.3L770.8 954.7L772.3 954.5L773.8 954.8L775.4 954.9L776.9 954.3L778.5 954.4L780.0 954.6L781.5 954.1L783.0 953.9L784.5 954.3L786.1 954.4L787.6 954.3L789.1 954.1L790.6 954.2L792.1 953.9L793.6 953.8L795.2 953.6L796.7 953.3L798.2 953.6L799.7 953.0L801.2 953.2L802.7 953.6L804.2 953.4L805.8 953.3L807.3 952.8L808.8 952.9L810.3 952.9L811.8 953.0L813.3 952.7L814.8 952.9L816.4 953.1L817.9 952.2L819.4 952.7L820.9 952.7L822.4 952.2L823.9 952.3L825.5 952.7L827.0 951.6L828.5 952.1L830.0 951.6L832.0 949.0L833.6 949.2L835.1 948.7L836.7 948.2L838.2 948.7L839.8 948.6L841.3 948.8L842.9 948.6L844.4 948.7L846.0 948.9L847.6 948.5L849.1 948.4L850.7 948.9L852.2 948.1L853.8 948.6L855.3 948.2L856.9 948.6L858.4 947.9L860.0 948.8L861.5 948.1L863.1 947.7L864.6 947.9L866.2 947.9L867.7 947.5L869.2 947.8L870.8 947.8L872.3 948.0L873.8 947.6L875.4 947.4L876.9 947.3L878.5 947.8L880.0 948.0L881.5 947.5L883.1 947.1L884.6 947.6L886.2 947.1L887.7 946.9L889.2 946.7L890.8 947.4L892.3 947.3L893.8 947.1L895.4 946.9L896.9 946.9L898.5 946.5L900.0 947.2L901.5 946.5L903.0 946.8L904.5 946.9L906.0 946.9L907.5 946.5L909.0 946.3L910.5 946.5L912.0 946.0L913.5 946.8L915.0 946.2L916.5 946.7L918.0 946.0L919.5 946.1L921.0 945.9L922.5 946.1L924.0 945.8L925.5 945.6L927.0 946.3L928.5 945.8L930.0 945.7L931.5 945.7L933.0 945.8L934.5 945.7L936.0 945.8L937.5 945.8L939.0 945.3L940.5 945.9L942.0 945.7L943.5 944.7L945.0 945.5L946.5 945.5L948.0 945.3L949.5 944.5L951.0 945.2L952.5 944.9L954.0 944.1L955.5 944.0L957.0 945.0L958.5 944.6L960.0 944.0L961.5 943.8L963.1 943.8L964.6 943.8L966.2 944.4L967.7 943.8L969.2 943.5L970.8 944.3L972.3 944.1L973.8 943.4L975.4 944.1L976.9 943.7L978.5 943.9L980.0 943.7L981.5 943.9L983.1 943.7L984.6 943.7L986.2 942.9L987.7 943.4L989.2 943.2L990.8 943.3L992.3 942.9L993.8 943.4L995.4 942.9L996.9 942.6L998.5 942.5L1000.0 942.3L1001.5 942.4L1003.0 941.7L1004.5 941.9L1006.0 941.3L1007.5 941.4L1009.0 941.1L1010.5 940.9L1012.0 941.0L1013.5 939.8L1015.0 940.5L1016.5 939.8L1018.0 939.7L1019.5 940.1L1021.0 940.6L1022.5 940.5L1024.0 940.9L1025.5 941.8L1027.0 941.2L1028.5 942.1L1030.0 942.4L1031.5 941.4L1033.1 941.7L1034.6 941.5L1036.2 941.4L1037.7 940.4L1039.2 940.8L1040.8 939.9L1042.3 939.6L1043.8 939.7L1045.4 938.4L1046.9 938.8L1048.5 938.4L1050.0 937.7L1051.6 938.4L1053.1 938.0L1054.7 938.3L1056.2 938.5L1057.8 938.9L1059.4 938.4L1060.9 938.8L1062.5 939.0L1064.1 939.3L1065.6 939.7L1067.2 939.3L1068.8 940.0L1070.3 939.7L1071.9 939.9L1073.4 939.8L1075.0 940.2L1076.5 940.5L1078.0 939.9L1079.5 939.8L1081.0 939.0L1082.5 938.7L1084.0 938.5L1085.5 938.5L1087.0 938.3L1088.5 938.3L1090.0 937.2L1091.5 937.9L1093.1 938.0L1094.6 937.5L1096.2 936.9L1097.7 937.1L1099.2 936.7L1100.8 936.8L1102.3 937.5L1103.8 937.1L1105.4 937.1L1106.9 937.2L1108.5 937.2L1110.0 936.8L1111.5 936.8L1113.1 936.7L1114.6 936.7L1116.2 936.5L1117.7 936.5L1119.2 935.9L1120.8 936.3L1122.3 936.0L1123.8 936.3L1125.4 935.5L1126.9 935.5L1128.5 935.3L1130.0 936.0L1131.5 936.1L1133.0 935.8L1134.5 935.5L1136.1 935.9L1137.6 935.8L1139.1 935.6L1140.6 935.2L1142.1 935.2L1143.6 935.3L1145.2 935.2L1146.7 935.3L1148.2 935.5L1149.7 935.7L1151.2 934.7L1152.7 935.3L1154.2 934.7L1155.8 934.7L1157.3 935.4L1158.8 935.1L1160.3 935.5L1161.8 934.9L1163.3 934.4L1164.8 934.8L1166.4 935.0L1167.9 935.3L1169.4 935.4L1170.9 934.8L1172.4 934.7L1173.9 934.3L1175.5 934.9L1177.0 934.4L1178.5 934.3L1180.0 934.1L1181.5 934.0L1183.0 934.7L1184.6 934.1L1186.1 935.0L1187.6 934.0L1189.1 934.8L1190.6 934.0L1192.1 933.8L1193.7 934.6L1195.2 934.0L1196.7 934.6L1198.2 933.9L1199.7 933.7L1201.2 934.5L1202.8 934.4L1204.3 934.5L1205.8 934.4L1207.3 933.6L1208.8 934.2L1210.3 934.3L1211.9 934.0L1213.4 934.5L1214.9 933.7L1216.4 934.4L1217.9 934.1L1219.4 933.3L1221.0 933.3L1222.5 934.0L1224.0 934.1L1225.7 930.8L1227.3 928.5L1229.0 926.4L1230.6 925.3L1232.2 925.6L1233.8 924.7L1235.4 923.8L1237.0 923.7L1238.6 923.4L1240.2 922.8L1241.8 922.6L1243.4 921.6L1245.0 921.8L1246.6 921.3L1248.1 921.5L1249.7 921.4L1251.2 921.1L1252.8 921.0L1254.4 921.4L1255.9 921.5L1257.5 921.2L1259.1 920.9L1260.6 920.5L1262.2 920.2L1263.8 921.1L1265.3 920.7L1266.9 920.8L1268.4 920.2L1270.0 920.4L1271.6 920.4L1273.2 919.7L1274.9 919.0L1276.5 918.2L1278.1 917.8L1279.8 917.9L1281.4 916.8L1283.0 916.7L1284.6 916.6L1286.2 916.9L1287.8 916.8L1289.3 916.3L1290.9 916.0L1292.5 916.2L1294.1 916.4L1295.7 916.6L1297.2 916.8L1298.8 916.9L1300.4 916.0L1302.0 916.9L1303.6 918.6L1305.2 920.4L1306.8 921.9L1308.4 923.3L1310.0 925.7L1311.5 925.7L1313.1 925.6L1314.6 925.9L1316.2 925.3L1317.7 925.1L1319.2 925.7L1320.8 926.0L1322.3 925.4L1323.8 926.1L1325.4 926.3L1326.9 925.6L1328.5 926.1L1330.0 926.2L1331.5 926.2L1333.0 926.1L1334.5 926.3L1336.0 927.1L1337.5 927.3L1339.0 927.2L1340.5 926.9L1342.0 927.9L1343.5 928.1L1345.0 927.7L1346.6 928.0L1348.1 928.3L1349.7 928.2L1351.2 927.7L1352.8 927.6L1354.4 927.7L1355.9 927.2L1357.5 927.1L1359.1 927.0L1360.6 927.5L1362.2 927.1L1363.8 927.2L1365.3 927.0L1366.9 927.1L1368.4 926.6L1370.0 926.4L1371.5 927.6L1373.0 927.1L1374.5 927.0L1376.0 927.8L1377.5 928.2L1379.0 927.7L1380.5 928.3L1382.0 928.2L1383.5 928.6L1385.0 928.3L1386.5 928.5L1388.0 929.7L1389.5 929.8L1391.0 929.5L1392.5 929.8L1394.0 929.7L1395.5 930.4L1397.0 930.2L1398.5 931.0L1400.0 931.0L1401.5 931.1L1403.1 931.2L1404.6 930.4L1406.2 930.2L1407.7 930.4L1409.2 930.3L1410.8 930.2L1412.3 930.2L1413.8 930.8L1415.4 931.1L1416.9 930.7L1418.5 931.2L1420.0 931.2L1421.5 930.1L1423.1 930.6L1424.6 930.3L1426.2 929.9L1427.7 930.8L1429.3 929.9L1430.8 930.2L1432.4 930.2L1433.9 930.4L1435.5 930.0L1437.0 929.6L1438.5 929.6L1440.1 929.2L1441.6 930.0L1443.2 929.9L1444.7 929.0L1446.3 928.7L1447.8 928.9L1449.4 928.9L1450.9 929.4L1452.5 929.3L1454.0 929.2L1455.5 928.2L1457.1 929.0L1458.6 928.8L1460.1 928.7L1461.7 929.0L1463.2 927.9L1464.7 928.0L1466.3 928.6L1467.8 928.7L1469.3 928.4L1470.9 927.9L1472.4 928.1L1473.9 928.3L1475.5 927.5L1477.0 927.7L1478.5 927.5L1480.1 927.3L1481.6 927.6L1483.1 927.2L1484.7 927.2L1486.2 927.1L1487.7 927.6L1489.3 926.8L1490.8 927.5L1492.3 926.9L1493.9 926.6L1495.4 927.6L1496.9 926.7L1498.5 927.4L1500.0 927.3L1501.5 927.3L1503.1 926.3L1504.6 926.6L1506.2 926.1L1507.7 927.0L1509.2 926.8L1510.8 926.5L1512.3 926.2L1513.8 926.0L1515.4 926.5L1516.9 926.0L1518.5 926.1L1520.0 925.5L1521.5 925.5L1523.1 925.3L1524.6 925.9L1526.2 925.7L1527.7 925.1L1529.2 925.8L1530.8 925.1L1532.3 925.2L1533.8 924.8L1535.4 924.9L1536.9 925.4L1538.5 924.8L1540.0 924.5L1541.5 924.8L1543.0 924.6L1544.5 925.2L1546.0 924.3L1547.5 925.2L1549.0 924.1L1550.5 925.0L1552.0 924.7L1553.5 924.2L1555.0 924.4L1556.5 924.1L1558.0 924.1L1559.5 924.0L1561.0 924.1L1562.5 924.7L1564.0 924.7L1565.5 924.6L1567.0 923.6L1568.5 923.8L1570.0 924.4L1571.5 923.4L1573.0 924.1L1574.5 923.6L1576.0 924.3L1577.5 923.2L1579.0 924.0L1580.5 923.4L1582.0 923.2L1583.5 923.0L1585.0 923.8L1586.5 923.5L1588.0 923.0L1589.5 923.3L1591.0 923.7L1592.5 922.9L1594.0 923.3L1595.5 922.7L1597.0 922.7L1598.5 923.3L1600.0 923.2L1601.5 922.6L1603.0 922.5L1604.5 922.4L1606.0 923.0L1607.5 922.8L1609.0 922.5L1610.5 922.4L1612.0 922.8L1613.5 922.9L1615.0 923.0L1616.5 922.7L1618.0 922.2L1619.5 922.0L1621.0 922.7L1622.5 922.3L1624.0 922.6L1625.5 921.9L1627.0 922.7L1628.5 922.1L1630.0 922.6L1631.5 922.6L1633.0 922.2L1634.5 921.6L1636.0 922.6L1637.5 922.0L1639.0 922.4L1640.5 921.7L1642.0 921.6L1643.5 922.3L1645.0 921.7L1646.5 921.5L1648.0 921.7L1649.5 921.9L1651.0 921.2L1652.5 921.7L1654.0 921.6L1655.5 921.6L1657.0 921.2L1658.5 921.8L1660.0 921.8L1661.5 921.9L1663.1 921.2L1664.6 921.6L1666.2 921.2L1667.7 921.5L1669.2 920.7L1670.8 921.6L1672.3 921.6L1673.8 921.1L1675.4 921.1L1676.9 921.0L1678.5 921.0L1680.0 920.4L1681.5 921.4L1683.1 920.5L1684.6 920.4L1686.2 920.3L1687.7 920.4L1689.2 921.0L1690.8 920.1L1692.3 920.1L1693.8 920.7L1695.4 920.1L1696.9 919.9L1698.5 920.5L1700.0 920.4L1701.5 920.3L1703.0 920.5L1704.5 919.8L1706.0 920.6L1707.5 920.4L1709.0 919.6L1710.5 919.7L1712.0 920.0L1713.5 920.0L1715.0 919.7L1716.5 919.5L1718.0 919.8L1719.5 919.5L1721.0 919.9L1722.5 920.2L1724.0 919.4L1725.5 919.8L1727.0 920.0L1728.5 919.3L1730.0 920.0L1731.5 920.1L1733.0 919.5L1734.5 919.5L1736.0 919.9L1737.5 919.5L1739.0 919.3L1740.5 919.9L1742.0 919.7L1743.5 919.2L1745.0 919.0L1746.5 919.1L1748.0 919.2L1749.5 919.8L1751.0 919.2" fill="none" stroke="#5c1e7e" stroke-width="1.6" stroke-linejoin="round" shape-rendering="crispEdges" clip-path="url(#cs8)"/>
<path d="M3 161.5H1718" stroke="#3c3c3c" stroke-width="1" stroke-dasharray="5 5" shape-rendering="crispEdges"/>
<path d="M3 246.5H1738" stroke="#3c3c3c" stroke-width="1" stroke-dasharray="5 5" shape-rendering="crispEdges"/>
<path d="M3 349.5H1724" stroke="#3c3c3c" stroke-width="1" stroke-dasharray="5 5" shape-rendering="crispEdges"/>
<path d="M3 478.5H1738" stroke="#3c3c3c" stroke-width="1" stroke-dasharray="5 5" shape-rendering="crispEdges"/>
<path d="M3 583.5H1724" stroke="#3c3c3c" stroke-width="1" stroke-dasharray="5 5" shape-rendering="crispEdges"/>
<path d="M3 863.5H1717" stroke="#3c3c3c" stroke-width="1" stroke-dasharray="5 5" shape-rendering="crispEdges"/>
<path d="M3 969.5H1738" stroke="#3c3c3c" stroke-width="1" stroke-dasharray="5 5" shape-rendering="crispEdges"/>
</g>
<path d="M45 58H65.6L55.3 68.2Z" fill="#f7891c"/>
<path d="M46.2 644H64.2V662.8H59.2L55.3 669.8L51.4 662.8H46.2Z" fill="#000" stroke="#f7891c" stroke-width="2" stroke-linejoin="miter"/>
<path d="M1730 700.5L1741.8 690.4V698.8H1751V702.2H1741.8V710.6Z" fill="#2626be"/>
<path d="M1711.5 64.3H1743.2Q1745 64.3 1745 66.1V97.6Q1745 99.8 1743.2 98.4L1710.6 66.2Q1709.3 64.3 1711.5 64.3Z" fill="#505050" stroke="#1e1e1e" stroke-width="1.3" stroke-linejoin="round"/>
<circle cx="1737" cy="71.8" r="3.7" fill="none" stroke="#a0a0a0" stroke-width="1.6"/><path d="M1734.2 74.6L1728.3 80.3" stroke="#a0a0a0" stroke-width="2.6" stroke-linecap="round"/>
<path d="M9.5 102.30000000000001H77.4L83.6 115.4L77.4 128.5H9.5Q6.4 128.5 6.4 125.5V105.30000000000001Q6.4 102.30000000000001 9.5 102.30000000000001Z" fill="#e6e6e6" stroke="#1a1a1a" stroke-width="1.8" stroke-linejoin="round"/>
<path d="M32.8 102.30000000000001V128.5" stroke="#1a1a1a" stroke-width="1.8"/>
<path d="M9.5 219.4H77.4L83.6 232.5L77.4 245.6H9.5Q6.4 245.6 6.4 242.6V222.4Q6.4 219.4 9.5 219.4Z" fill="#e4f6f7" stroke="#1fc4cc" stroke-width="1.8" stroke-linejoin="round"/>
<path d="M32.8 219.4V245.6" stroke="#1fc4cc" stroke-width="1.8"/>
<path d="M9.5 337.29999999999995H29.5L42 349.9L29.5 362.5H9.5Q6.4 362.5 6.4 359.5V340.29999999999995Q6.4 337.29999999999995 9.5 337.29999999999995Z" fill="#fde6ea" stroke="#ec5a72" stroke-width="1.4" stroke-linejoin="round"/>
<path d="M9.5 453.2H77.4L83.6 466.3L77.4 479.40000000000003H9.5Q6.4 479.40000000000003 6.4 476.40000000000003V456.2Q6.4 453.2 9.5 453.2Z" fill="#f1f7e6" stroke="#7fbf2a" stroke-width="1.8" stroke-linejoin="round"/>
<path d="M32.8 453.2V479.40000000000003" stroke="#7fbf2a" stroke-width="1.8"/>
<path d="M9.5 571.4H29.5L42 584.0L29.5 596.6H9.5Q6.4 596.6 6.4 593.6V574.4Q6.4 571.4 9.5 571.4Z" fill="#fef1e4" stroke="#f7a548" stroke-width="1.4" stroke-linejoin="round"/>
<path d="M9.5 687.5H77.4L83.6 700.6L77.4 713.7H9.5Q6.4 713.7 6.4 710.7V690.5Q6.4 687.5 9.5 687.5Z" fill="#e6e6f6"/>
<path d="M9.5 687.5H32.8V713.7H9.5Q6.4 713.7 6.4 710.7V690.5Q6.4 687.5 9.5 687.5Z" fill="#2a2ac6"/>
<path d="M9.5 687.5H77.4L83.6 700.6L77.4 713.7H9.5Q6.4 713.7 6.4 710.7V690.5Q6.4 687.5 9.5 687.5Z" fill="none" stroke="#0a0a0a" stroke-width="2.2" stroke-linejoin="round"/>
<path d="M32.8 687.5V713.7" stroke="#0a0a0a" stroke-width="2.2"/>
<g clip-path="url(#cp)">
<clipPath id="cm1"><rect x="0" y="840" width="60" height="35"/></clipPath>
<g clip-path="url(#cm1)">
<path d="M9.5 850.8H29.5L42 863.4L29.5 876.0H9.5Q6.4 876.0 6.4 873.0V853.8Q6.4 850.8 9.5 850.8Z" fill="#fef1e4" stroke="#f7a548" stroke-width="1.4" stroke-linejoin="round"/>
</g>
<path d="M9.5 956.6H29.5L42 969.2L29.5 981.8000000000001H9.5Q6.4 981.8000000000001 6.4 978.8000000000001V959.6Q6.4 956.6 9.5 956.6Z" fill="#f1e6f5" stroke="#9258ac" stroke-width="1.4" stroke-linejoin="round"/>
</g>
<g fill="none" stroke="#e8e8e8" stroke-width="1" shape-rendering="crispEdges"><path d="M593 36.5H586.5V52.5H593"/><path d="M1161 36.5H1167.5V52.5H1161"/></g>
<rect x="587" y="44" width="580" height="2" fill="#b4b4b4"/>
<path d="M595.8 33H611L603.4 38.6Z" fill="#f7891c"/>
<path d="M597 40.4H609.8V51.6H606.3L603.4 56.4L600.5 51.6H597Z" fill="#000" stroke="#f7891c" stroke-width="1.4"/>
</svg>
</div>
<div style="position:absolute;left:0;top:0;width:1920px;height:1080px;z-index:4;will-change:transform">
<span class="t" style="left:102.25px;top:104.00px;font-size:20.3px;color:#0a0a0a;transform:scaleX(0.9608);-webkit-text-stroke:0.25px currentColor;text-shadow:-0.6px 0.8px 0.5px #888;">U_loop,coil</span>
<span class="t" style="left:102.25px;top:221.00px;font-size:20.3px;color:#1fbcc4;transform:scaleX(0.9323);-webkit-text-stroke:0.25px currentColor;text-shadow:-0.6px 0.8px 0.5px #0a4a50;">U_Bt,coil</span>
<span class="t" style="left:54.60px;top:338.00px;font-size:20.3px;color:#d81c3a;transform:scaleX(0.9142);-webkit-text-stroke:0.25px currentColor;text-shadow:-0.6px 0.8px 0.5px #50101a;">U_Rog,coil</span>
<span class="t" style="left:102.25px;top:455.00px;font-size:20.3px;color:#78b826;transform:scaleX(0.9442);-webkit-text-stroke:0.25px currentColor;text-shadow:-0.6px 0.8px 0.5px #2c4a0c;">U_Photod</span>
<span class="t" style="left:54.00px;top:573.00px;font-size:20.3px;color:#f28a1a;transform:scaleX(0.9460);-webkit-text-stroke:0.25px currentColor;text-shadow:-0.6px 0.8px 0.5px #6a3a08;">U_Diamagn</span>
<span class="t" style="left:101.00px;top:689.00px;font-size:20.3px;color:#2424b4;transform:scaleX(0.9876);-webkit-text-stroke:0.25px currentColor;text-shadow:-0.6px 0.8px 0.5px #0a0a50;">Trigger</span>
<span class="t" style="left:54.20px;top:848.00px;font-size:20.3px;color:#f28a1a;transform:scaleX(0.8703);-webkit-text-stroke:0.25px currentColor;text-shadow:-0.6px 0.8px 0.5px #6a3a08;">B_t</span>
<span class="t" style="left:54.20px;top:958.00px;font-size:20.3px;color:#5c1e7e;transform:scaleX(0.8754);-webkit-text-stroke:0.25px currentColor;text-shadow:-0.6px 0.8px 0.5px #2a0a3c;">I_p</span>
<span class="t" style="left:11.00px;top:109.00px;font-size:12.3px;color:#1a1a1a;transform:scaleX(0.8365);">C 1</span>
<span class="t" style="left:45.25px;top:109.00px;font-size:12.3px;color:#1a1a1a;transform:scaleX(0.9385);">20 V</span>
<span class="t" style="left:11.00px;top:226.00px;font-size:12.3px;color:#0a0a0a;transform:scaleX(0.8679);">C 2</span>
<span class="t" style="left:36.00px;top:226.00px;font-size:12.3px;color:#0a0a0a;transform:scaleX(0.9669);">300 mV</span>
<span class="t" style="left:14.75px;top:343.00px;font-size:12.3px;color:#ea4a66;transform:scaleX(0.8757);">C 3</span>
<span class="t" style="left:11.00px;top:460.00px;font-size:12.3px;color:#0a0a0a;transform:scaleX(0.8940);">C 4</span>
<span class="t" style="left:36.00px;top:460.00px;font-size:12.3px;color:#0a0a0a;transform:scaleX(0.9669);">200 mV</span>
<span class="t" style="left:15.00px;top:578.00px;font-size:12.3px;color:#111;transform:scaleX(0.9019);">C 5</span>
<span class="t" style="left:11.25px;top:694.00px;font-size:12.3px;color:#fff;transform:scaleX(0.8810);">C 6</span>
<span class="t" style="left:48.10px;top:694.00px;font-size:12.3px;color:#3030c4;transform:scaleX(0.9485);">3 V</span>
<span class="t" style="left:13.50px;top:857.00px;font-size:12.3px;color:#111;transform:scaleX(0.9702);">M 1</span>
<span class="t" style="left:13.50px;top:963.00px;font-size:12.3px;color:#7a3c98;transform:scaleX(0.9946);">M 2</span>
<span class="t" style="left:20.40px;top:6.00px;font-size:15.5px;color:#f2f2f2;transform:scaleX(0.9942);">File</span>
<span class="t" style="left:86.60px;top:6.00px;font-size:15.5px;color:#f2f2f2;transform:scaleX(1.0544);">Edit</span>
<span class="t" style="left:155.60px;top:6.00px;font-size:15.5px;color:#f2f2f2;transform:scaleX(1.1716);">Utility</span>
<span class="t" style="left:240.70px;top:6.00px;font-size:15.5px;color:#f2f2f2;transform:scaleX(1.0755);">Help</span>
<span class="t" style="left:16.90px;top:37.00px;font-size:16.6px;color:#e6e6e6;transform:scaleX(1.0778);">Waveform View</span>
<span class="t" style="left:50.50px;top:648.00px;font-size:16.0px;color:#f7891c;transform:scaleX(0.9836);font-weight:bold;">T</span>
<span class="t" style="left:600.50px;top:42.00px;font-size:9.5px;color:#f7891c;font-weight:bold;">T</span>
</div>
<div style="position:absolute;left:0;top:0;width:1920px;height:1080px;z-index:5;will-change:transform">
<div id="side"></div>
<div class="btn" style="left:1778px;top:54px;width:61px;height:35px"></div>
<div class="btn" style="left:1778px;top:100px;width:61px;height:35px"></div>
<div class="btn" style="left:1778px;top:146px;width:61px;height:35px"></div>
<div class="btn" style="left:1778px;top:196px;width:61px;height:35px"></div>
<div class="btn" style="left:1850px;top:54px;width:61px;height:35px"></div>
<div class="btn" style="left:1850px;top:100px;width:61px;height:35px"></div>
<div class="btn" style="left:1850px;top:146px;width:61px;height:35px"></div>
<div class="btn" style="left:1850px;top:196px;width:61px;height:35px"></div>
<div class="hsep" style="left:1773px;top:189px;width:144px"></div>
<div class="hsep" style="left:1773px;top:241px;width:144px"></div>
<div style="position:absolute;left:1760px;top:501.5px;width:4px;height:4px;border-radius:2px;background:#c6c6c6"></div>
<div style="position:absolute;left:1760px;top:510.4px;width:4px;height:4px;border-radius:2px;background:#c6c6c6"></div>
<div style="position:absolute;left:1760px;top:519.2px;width:4px;height:4px;border-radius:2px;background:#c6c6c6"></div>
<div class="bdg" style="left:3px;top:984px;height:94px"><div class="bh" style="height:19px;background:#1e1e1e"></div><div class="bsep"></div><div class="clip"></div></div>
<div class="bdg" style="left:98px;top:984px;height:94px"><div class="bh" style="height:19px;background:#1d3f40"></div><div class="bsep"></div><div class="clip"></div></div>
<div class="bdg" style="left:193px;top:984px;height:94px"><div class="bh" style="height:19px;background:#45252b"></div><div class="bsep"></div><div class="clip"></div></div>
<div class="bdg" style="left:288px;top:1003px;height:75px"><div class="bh" style="height:19px;background:#3b4524"></div><div class="bsep2"></div></div>
<div class="bdg" style="left:383px;top:1003px;height:75px"><div class="bh" style="height:19px;background:#493422"></div><div class="bsep2"></div></div>
<div class="bdg" style="left:478px;top:984px;height:94px"><div class="bh" style="height:19px;background:#2828c0"></div><div class="bsep"></div><div class="clip"></div></div>
<div class="bdg" style="left:573px;top:1003px;height:75px"><div class="bh" style="height:19px;background:#463220"></div><div class="bsep2"></div></div>
<div class="bdg" style="left:668px;top:1003px;height:75px"><div class="bh" style="height:19px;background:#2e2036"></div><div class="bsep2"></div></div>
<div class="btn" style="left:1129px;top:999px;width:38px;height:78px"><div style="position:absolute;left:4px;top:7px;width:31px;height:2px;background:#c42222"></div></div>
<div class="btn" style="left:1174px;top:999px;width:38px;height:78px"><div style="position:absolute;left:4px;top:7px;width:31px;height:2px;background:#c8cce6"></div></div>
<div class="btn" style="left:1219px;top:999px;width:38px;height:78px"><div style="position:absolute;left:4px;top:7px;width:31px;height:2px;background:#c252ff"></div></div>
<div class="vsep" style="left:1118px;top:1000px;height:78px"></div>
<div class="vsep" style="left:1269px;top:1000px;height:78px"></div>
<div class="vsep" style="left:1811px;top:1000px;height:78px"></div>
<div class="bdg" style="left:1282px;top:1004.3px;width:196.5px;height:73.2px;box-shadow:0 0 0 1px #0e0e0e"><div class="bh" style="height:18.4px;background:#58595b"></div><div class="bsep2"></div></div>
<div class="bdg" style="left:1487px;top:1004.3px;width:156.5px;height:73.2px;box-shadow:0 0 0 1px #0e0e0e"><div class="bh" style="height:18.4px;background:#58595b"></div><div class="bsep2"></div></div>
<div style="position:absolute;left:1490.3px;top:1025.5px;width:28px;height:13.5px;background:#2a2ac8;border:1px solid #0a0a0a;border-radius:5.5px"></div>
<div class="bdg" style="left:1652px;top:1004.3px;width:146.5px;height:73.2px;box-shadow:0 0 0 1px #0e0e0e"><div class="bh" style="height:18.4px;background:#58595b"></div><div class="bsep2"></div></div>
<div style="position:absolute;left:1822px;top:999.5px;width:90px;height:35px;background:#ff1d27;border-radius:6px;box-shadow:0 0 0 1px #5a3030"></div>
<div style="position:absolute;left:1822px;top:1040.5px;width:90px;height:37.5px;background:#c8c8c8;border-radius:5px"></div>
</div>
<div style="position:absolute;left:0;top:0;width:1920px;height:1080px;z-index:6;will-change:transform">
<svg id="icons" width="1920" height="1080" viewBox="0 0 1920 1080">
<path d="M11.2 1007.2L18.4 1020.6H4Z" fill="#ffee00" stroke="#3a3270" stroke-width="0.9" stroke-linejoin="round"/>
<path d="M11.2 1011V1016.6" stroke="#8a8470" stroke-width="1.5"/><rect x="10.5" y="1017.6" width="1.4" height="1.5" fill="#8a8470"/>
<path d="M106.2 1007.2L113.4 1020.6H99Z" fill="#ffee00" stroke="#3a3270" stroke-width="0.9" stroke-linejoin="round"/>
<path d="M106.2 1011V1016.6" stroke="#8a8470" stroke-width="1.5"/><rect x="105.5" y="1017.6" width="1.4" height="1.5" fill="#8a8470"/>
<path d="M201.2 1007.2L208.4 1020.6H194Z" fill="#ffee00" stroke="#3a3270" stroke-width="0.9" stroke-linejoin="round"/>
<path d="M201.2 1011V1016.6" stroke="#8a8470" stroke-width="1.5"/><rect x="200.5" y="1017.6" width="1.4" height="1.5" fill="#8a8470"/>
<path d="M486.2 1007.2L493.4 1020.6H479Z" fill="#ffee00" stroke="#3a3270" stroke-width="0.9" stroke-linejoin="round"/>
<path d="M486.2 1011V1016.6" stroke="#8a8470" stroke-width="1.5"/><rect x="485.5" y="1017.6" width="1.4" height="1.5" fill="#8a8470"/>
<path d="M1530.5 1037H1534L1542 1027.5H1546" fill="none" stroke="#3a3a90" stroke-width="1.1"/>
<path d="M1391.8 1063.2H1399.6V1071H1397.4L1395.7 1074.2L1394 1071H1391.8Z" fill="#000" stroke="#f7891c" stroke-width="1.1"/>
<path d="M1393.6 1065.4H1397.8M1395.7 1065.4V1069.6" stroke="#fff" stroke-width="1.1"/>
<rect x="1798.3" y="203" width="21.5" height="18.8" fill="none" stroke="#c8c8c8" stroke-width="2" stroke-dasharray="3.4 3.6" stroke-dashoffset="1.7"/>
<circle cx="1811" cy="211" r="4.6" fill="none" stroke="#c8c8c8" stroke-width="1.5"/><path d="M1807.6 214.4L1803.4 217.6" stroke="#c8c8c8" stroke-width="2.8" stroke-linecap="round"/>
<path d="M1815 217L1823.4 222.4L1819.9 223.2L1822 226.6L1820.2 227.4L1818.2 224L1815.8 226.2Z" fill="#c8c8c8"/>
</svg>
</div>
<div style="position:absolute;left:0;top:0;width:1920px;height:1080px;z-index:7;will-change:transform">
<span class="t" style="left:1786.40px;top:0.00px;font-size:31.6px;color:#fff;transform:scaleX(0.7763);font-weight:bold;-webkit-text-stroke:1.1px #fff;">Te</span>
<span class="t" style="left:1814.60px;top:0.00px;font-size:31.6px;color:#fff;transform:scaleX(0.9309);font-weight:bold;-webkit-text-stroke:1.1px #fff;">k</span>
<span class="t" style="left:1832.70px;top:0.00px;font-size:31.6px;color:#fff;transform:scaleX(0.8044);font-weight:bold;-webkit-text-stroke:1.1px #fff;">tronix</span>
<span class="t" style="left:1802.60px;top:31.00px;font-size:16px;color:#ececec;transform:scaleX(1.0357);font-weight:bold;">Add New...</span>
<span class="t" style="left:1784.80px;top:63.00px;font-size:16.5px;color:#f6f6f6;transform:scaleX(0.8693);">Cursors</span>
<span class="t" style="left:1856.50px;top:63.00px;font-size:16.5px;color:#f6f6f6;transform:scaleX(0.9580);">Callout</span>
<span class="t" style="left:1780.10px;top:109.00px;font-size:16.5px;color:#f6f6f6;transform:scaleX(0.9145);">Measure</span>
<span class="t" style="left:1858.30px;top:109.00px;font-size:16.5px;color:#f6f6f6;transform:scaleX(0.8821);">Search</span>
<span class="t" style="left:1785.60px;top:147.00px;font-size:16.5px;color:#f6f6f6;transform:scaleX(0.8632);">Results</span>
<span class="t" style="left:1791.90px;top:163.00px;font-size:16.5px;color:#f6f6f6;transform:scaleX(0.8977);">Table</span>
<span class="t" style="left:1867.40px;top:155.00px;font-size:16.5px;color:#f6f6f6;transform:scaleX(0.9852);">Plot</span>
<span class="t" style="left:1856.40px;top:205.00px;font-size:16.5px;color:#f6f6f6;transform:scaleX(0.9658);">More...</span>
<span class="t" style="left:8.85px;top:985.00px;font-size:14.7px;color:#f2e53a;transform:scaleX(0.8904);">Ch 1</span>
<span class="t" style="left:19.80px;top:1005.00px;font-size:15.8px;color:#fff;transform:scaleX(0.9951);">Clipping</span>
<span class="t" style="left:8.85px;top:1025.00px;font-size:14.5px;color:#000;transform:scaleX(0.9643);">5 V/div</span>
<span class="t" style="left:9.40px;top:1044.00px;font-size:14.5px;color:#000;">1 MΩ</span>
<span class="t" style="left:8.85px;top:1062.00px;font-size:14.5px;color:#000;transform:scaleX(0.9694);">200 kHz</span>
<span class="t" style="left:75.00px;top:1061.00px;font-size:10.6px;color:#000;transform:scaleX(0.7915);">B</span>
<span class="t" style="left:80.92px;top:1064.00px;font-size:10.4px;color:#000;transform:scaleX(0.8327);">w</span>
<span class="t" style="left:103.10px;top:985.00px;font-size:14.7px;color:#22ccd6;transform:scaleX(0.9661);">Ch 2</span>
<span class="t" style="left:114.80px;top:1005.00px;font-size:15.8px;color:#fff;transform:scaleX(0.9951);">Clipping</span>
<span class="t" style="left:103.10px;top:1025.00px;font-size:14.5px;color:#000;transform:scaleX(1.0050);">250 mV/div</span>
<span class="t" style="left:104.40px;top:1044.00px;font-size:14.5px;color:#000;">1 MΩ</span>
<span class="t" style="left:103.85px;top:1062.00px;font-size:14.5px;color:#000;transform:scaleX(0.9694);">200 kHz</span>
<span class="t" style="left:170.00px;top:1061.00px;font-size:10.6px;color:#000;transform:scaleX(0.7915);">B</span>
<span class="t" style="left:175.92px;top:1064.00px;font-size:10.4px;color:#000;transform:scaleX(0.8327);">w</span>
<span class="t" style="left:198.30px;top:985.00px;font-size:14.7px;color:#ffffff;transform:scaleX(0.9564);">Ch 3</span>
<span class="t" style="left:209.80px;top:1005.00px;font-size:15.8px;color:#fff;transform:scaleX(0.9951);">Clipping</span>
<span class="t" style="left:198.30px;top:1025.00px;font-size:14.5px;color:#000;">450 mV/div</span>
<span class="t" style="left:199.40px;top:1044.00px;font-size:14.5px;color:#000;">1 MΩ</span>
<span class="t" style="left:198.85px;top:1062.00px;font-size:14.5px;color:#000;transform:scaleX(0.9694);">200 kHz</span>
<span class="t" style="left:265.00px;top:1061.00px;font-size:10.6px;color:#000;transform:scaleX(0.7915);">B</span>
<span class="t" style="left:270.92px;top:1064.00px;font-size:10.4px;color:#000;transform:scaleX(0.8327);">w</span>
<span class="t" style="left:293.10px;top:1005.00px;font-size:14.7px;color:#8fd42c;transform:scaleX(0.9661);">Ch 4</span>
<span class="t" style="left:293.10px;top:1025.00px;font-size:14.5px;color:#000;transform:scaleX(1.0050);">200 mV/div</span>
<span class="t" style="left:294.40px;top:1044.00px;font-size:14.5px;color:#000;">1 MΩ</span>
<span class="t" style="left:293.85px;top:1062.00px;font-size:14.5px;color:#000;transform:scaleX(0.9694);">200 kHz</span>
<span class="t" style="left:360.00px;top:1061.00px;font-size:10.6px;color:#000;transform:scaleX(0.7915);">B</span>
<span class="t" style="left:365.92px;top:1064.00px;font-size:10.4px;color:#000;transform:scaleX(0.8327);">w</span>
<span class="t" style="left:388.85px;top:1005.00px;font-size:14.7px;color:#f7941e;transform:scaleX(0.9387);">Ch 5</span>
<span class="t" style="left:389.40px;top:1025.00px;font-size:14.5px;color:#000;transform:scaleX(0.9519);">1 V/div</span>
<span class="t" style="left:389.40px;top:1044.00px;font-size:14.5px;color:#000;">1 MΩ</span>
<span class="t" style="left:388.85px;top:1062.00px;font-size:14.5px;color:#000;transform:scaleX(0.9694);">200 kHz</span>
<span class="t" style="left:455.00px;top:1061.00px;font-size:10.6px;color:#000;transform:scaleX(0.7915);">B</span>
<span class="t" style="left:460.92px;top:1064.00px;font-size:10.4px;color:#000;transform:scaleX(0.8327);">w</span>
<span class="t" style="left:483.60px;top:985.00px;font-size:14.7px;color:#ffffff;transform:scaleX(0.9500);">Ch 6</span>
<span class="t" style="left:494.80px;top:1005.00px;font-size:15.8px;color:#fff;transform:scaleX(0.9951);">Clipping</span>
<span class="t" style="left:483.60px;top:1025.00px;font-size:14.5px;color:#000;">750 mV/div</span>
<span class="t" style="left:484.40px;top:1044.00px;font-size:14.5px;color:#000;">1 MΩ</span>
<span class="t" style="left:483.85px;top:1062.00px;font-size:14.5px;color:#000;transform:scaleX(0.9694);">200 kHz</span>
<span class="t" style="left:550.00px;top:1061.00px;font-size:10.6px;color:#000;transform:scaleX(0.7915);">B</span>
<span class="t" style="left:555.92px;top:1064.00px;font-size:10.4px;color:#000;transform:scaleX(0.8327);">w</span>
<span class="t" style="left:578.50px;top:1004.00px;font-size:15.0px;color:#f7941e;transform:scaleX(1.0466);-webkit-text-stroke:0.3px #f7941e;">Math 1</span>
<span class="t" style="left:578.50px;top:1024.00px;font-size:14.5px;color:#000;transform:scaleX(1.0293);font-weight:bold;">65.5 mT/div</span>
<span class="t" style="left:578.50px;top:1044.00px;font-size:14.5px;color:#000;transform:scaleX(0.9743);">Intg(Ch2)…</span>
<span class="t" style="left:673.60px;top:1004.00px;font-size:15.0px;color:#fff;transform:scaleX(1.0553);-webkit-text-stroke:0.3px #fff;">Math 2</span>
<span class="t" style="left:673.30px;top:1024.00px;font-size:14.5px;color:#000;transform:scaleX(1.0410);font-weight:bold;">214.61 A/…</span>
<span class="t" style="left:673.30px;top:1044.00px;font-size:14.5px;color:#000;transform:scaleX(0.9876);">-Intg(Ch3…</span>
<span class="t" style="left:1135.90px;top:1020.00px;font-size:15.6px;color:#f4f4f4;transform:scaleX(0.9435);">Add</span>
<span class="t" style="left:1134.65px;top:1036.00px;font-size:15.6px;color:#f4f4f4;transform:scaleX(0.9187);">New</span>
<span class="t" style="left:1132.60px;top:1052.00px;font-size:15.6px;color:#f4f4f4;transform:scaleX(0.9460);">Math</span>
<span class="t" style="left:1180.90px;top:1020.00px;font-size:15.6px;color:#f4f4f4;transform:scaleX(0.9435);">Add</span>
<span class="t" style="left:1179.65px;top:1036.00px;font-size:15.6px;color:#f4f4f4;transform:scaleX(0.9187);">New</span>
<span class="t" style="left:1184.00px;top:1052.00px;font-size:15.6px;color:#f4f4f4;transform:scaleX(0.8231);">Ref</span>
<span class="t" style="left:1225.90px;top:1020.00px;font-size:15.6px;color:#f4f4f4;transform:scaleX(0.9435);">Add</span>
<span class="t" style="left:1224.65px;top:1036.00px;font-size:15.6px;color:#f4f4f4;transform:scaleX(0.9187);">New</span>
<span class="t" style="left:1228.20px;top:1052.00px;font-size:15.6px;color:#f4f4f4;transform:scaleX(0.8038);">Bus</span>
<span class="t" style="left:1286.60px;top:1005.00px;font-size:15.5px;color:#fff;transform:scaleX(1.0431);">Horizontal</span>
<span class="t" style="left:1285.50px;top:1024.00px;font-size:14.5px;color:#000;transform:scaleX(0.9791);">4.5 ms/div</span>
<span class="t" style="left:1391.50px;top:1024.00px;font-size:14.5px;color:#000;transform:scaleX(0.9626);">45 ms</span>
<span class="t" style="left:1285.50px;top:1043.00px;font-size:14.5px;color:#000;transform:scaleX(0.9054);">SR: 1 MS/s</span>
<span class="t" style="left:1392.60px;top:1043.00px;font-size:14.5px;color:#000;transform:scaleX(0.9629);">1 µs/pt</span>
<span class="t" style="left:1285.50px;top:1063.00px;font-size:14.5px;color:#000;transform:scaleX(0.9532);">RL: 45 kpts</span>
<span class="t" style="left:1405.80px;top:1063.00px;font-size:14.5px;color:#000;">3%</span>
<span class="t" style="left:1490.90px;top:1005.00px;font-size:15.5px;color:#fff;transform:scaleX(1.0162);">Trigger</span>
<span class="t" style="left:1501.18px;top:1025.00px;font-size:14.5px;color:#fff;">6</span>
<span class="t" style="left:1556.20px;top:1024.00px;font-size:14.5px;color:#000;transform:scaleX(0.9747);">3 V</span>
<span class="t" style="left:1656.30px;top:1005.00px;font-size:15.5px;color:#fff;transform:scaleX(1.0275);">Acquisition</span>
<span class="t" style="left:1655.75px;top:1025.00px;font-size:14.5px;color:#000;transform:scaleX(0.9819);">Manual,</span>
<span class="t" style="left:1736.25px;top:1025.00px;font-size:14.5px;color:#000;transform:scaleX(0.9528);">Analyze</span>
<span class="t" style="left:1655.75px;top:1043.00px;font-size:14.5px;color:#000;transform:scaleX(0.9641);">High Res: 16 bits</span>
<span class="t" style="left:1655.75px;top:1062.00px;font-size:14.5px;color:#000;transform:scaleX(0.9547);">Single: 1 /1</span>
<span class="t" style="left:1839.00px;top:1009.00px;font-size:13.6px;color:#fff;transform:scaleX(1.0202);font-weight:bold;">Stopped</span>
<span class="t" style="left:1828.90px;top:1042.00px;font-size:14.2px;color:#000;transform:scaleX(0.9940);">18 Jun 2025</span>
<span class="t" style="left:1826.70px;top:1060.00px;font-size:14.2px;color:#000;transform:scaleX(1.0098);">12:34:17 PM</span>
</div>
<div style="position:absolute;left:0;top:0;width:1920px;height:1080px;z-index:8;will-change:transform">
<svg width="1920" height="1080" viewBox="0 0 1920 1080"><path d="M1814.9 26.1L1826.4 9.5H1830.6L1820.1 26.1Z" fill="#1fc0e0"/></svg>
</div>
</body></html>
